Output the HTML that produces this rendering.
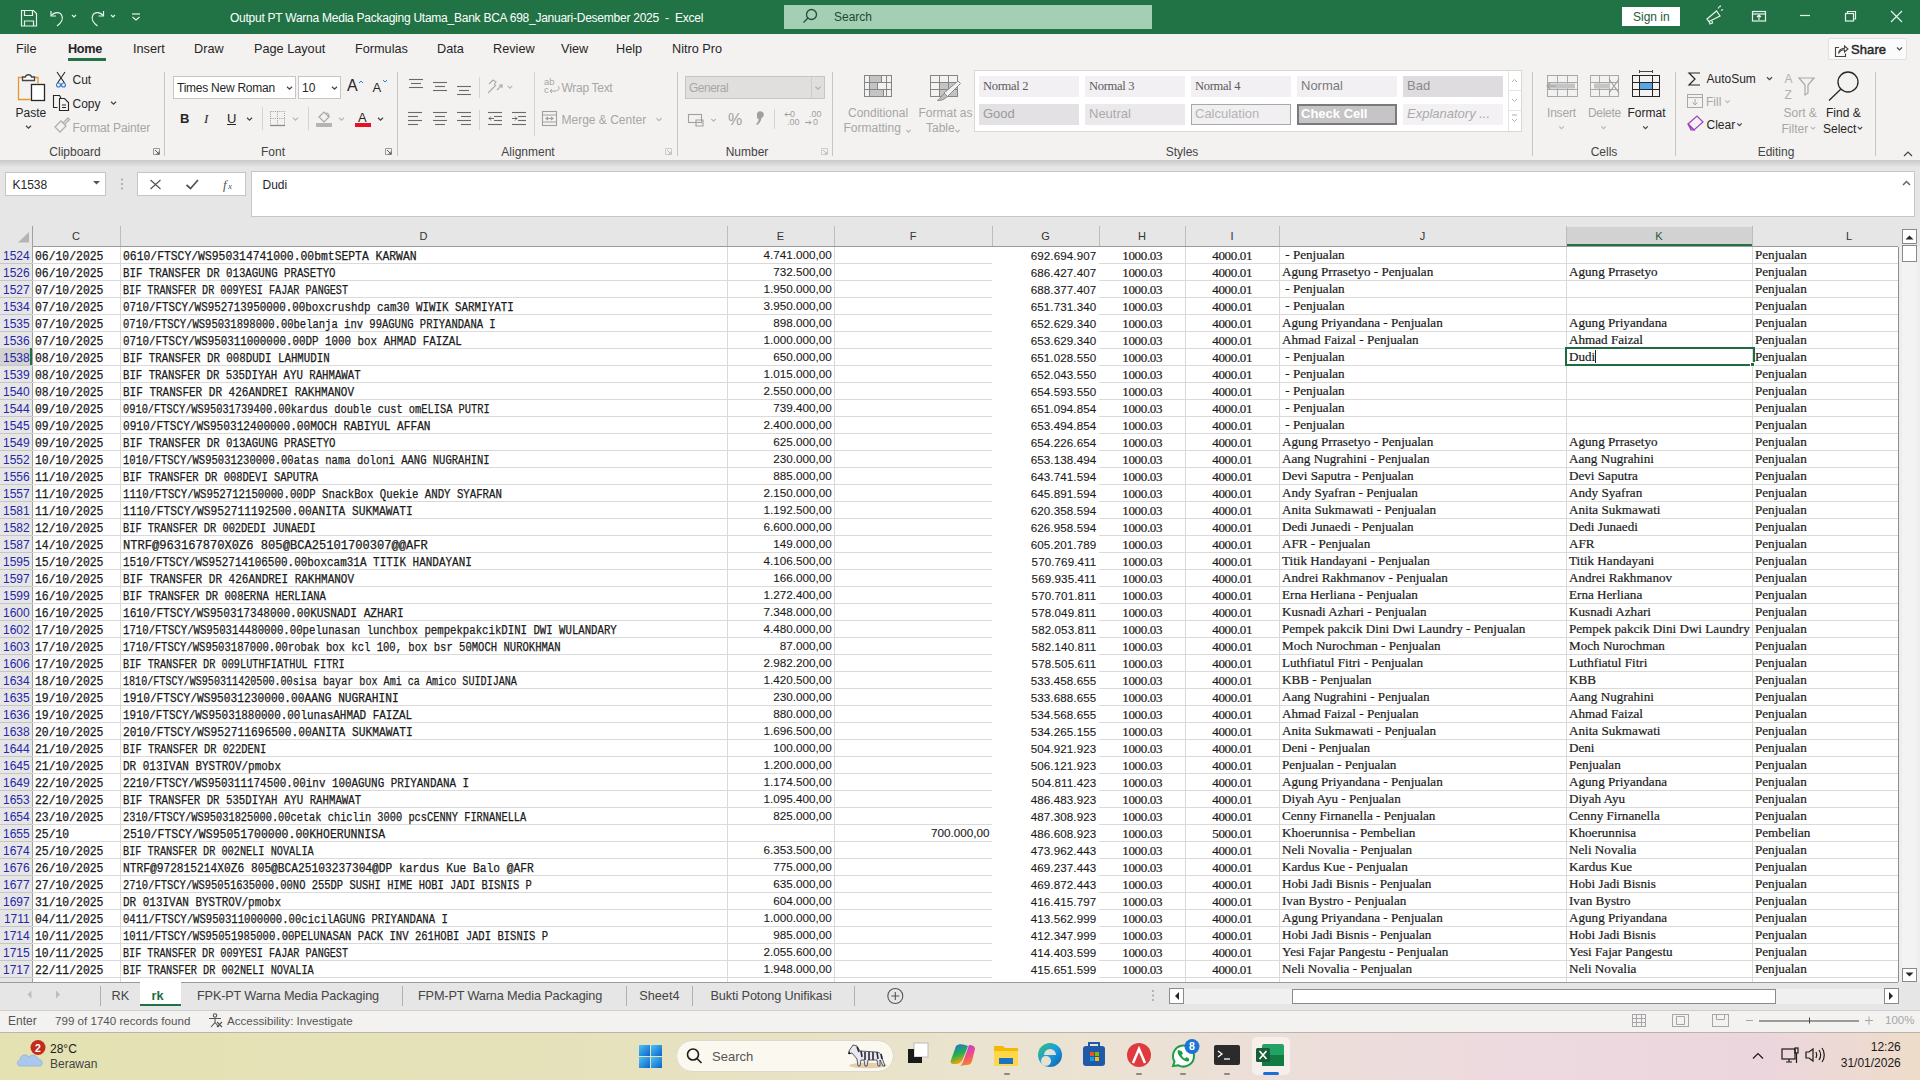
<!DOCTYPE html><html><head><meta charset="utf-8"><style>
html,body{margin:0;padding:0;width:1920px;height:1080px;overflow:hidden;background:#fff;}
body{position:relative;font-family:"Liberation Sans",sans-serif;}
.t{position:absolute;white-space:pre;line-height:1;}
.r{position:absolute;box-sizing:border-box;}
svg{position:absolute;overflow:visible;}
</style></head><body>
<div class="r" style="left:0px;top:0px;width:1920px;height:34px;background:#217346"></div>
<svg style="left:0;top:0" width="1" height="1"><g fill="none" stroke="#e8f3ec" stroke-width="1.2">
<path d="M21.5 10.5h12l3 3v12.5h-15z"/><path d="M24.5 10.5v5h8v-5"/><path d="M24.5 26v-5h9v5"/>
<path d="M51 11v5h5"/><path d="M51.5 15.5c3-4 9-4 10.5 0.5c1.5 4-1 7-5 10"/>
<path d="M72 15l2 2l2-2"/>
<path d="M103.5 11v5h-5"/><path d="M103 15.5c-3-4-9-4-10.5 0.5c-1.5 4 1 7 5 10"/>
<path d="M111 15l2 2l2-2"/>
<path d="M132 14h8"/><path d="M132.5 17l3.5 3l3.5-3"/>
</g></svg>
<div class="t" style="left:230px;top:11.84px;font-size:12px;color:#ffffff;font-family:'Liberation Sans', sans-serif;letter-spacing:-0.25px">Output PT Warna Media Packaging Utama_Bank BCA 698_Januari-Desember 2025  -  Excel</div>
<div class="r" style="left:784px;top:5px;width:368px;height:24px;background:#a3cfb4"></div>
<svg style="left:0;top:0" width="1" height="1"><g fill="none" stroke="#1f4e35" stroke-width="1.3"><circle cx="811.5" cy="14.5" r="5"/><path d="M808 18l-4.5 4.5"/></g></svg>
<div class="t" style="left:834px;top:10.84px;font-size:12px;color:#1f4a32;font-family:'Liberation Sans', sans-serif;">Search</div>
<div class="r" style="left:1622px;top:7px;width:58px;height:19px;background:#ffffff"></div>
<div class="t" style="left:1633px;top:11.34px;font-size:12px;color:#1f5a3a;font-family:'Liberation Sans', sans-serif;">Sign in</div>
<svg style="left:0;top:0" width="1" height="1"><g fill="none" stroke="#e8f3ec" stroke-width="1.2">
<path d="M1707 19l9.5-8l3.5 5l-11 5.5z"/><path d="M1709 21l1 3l2.5-1l-0.5-2"/><path d="M1718 8.5l1.5-2M1721 10.5l2-1M1720 7l0.5-1.5"/>
<rect x="1752.5" y="11.5" width="13" height="9.5"/><path d="M1752.5 14h13"/><path d="M1759 20v-5M1757 17l2-2l2 2"/>
<path d="M1800 15.5h10"/>
<rect x="1845.5" y="13.5" width="8" height="7.5"/><path d="M1847.5 13.5v-2h8v7.5h-2"/>
<path d="M1891 11l11 11M1902 11l-11 11"/>
</g></svg>
<div class="r" style="left:0px;top:34px;width:1920px;height:126px;background:#f3f2f1"></div>
<div class="t" style="left:16px;top:43.25px;font-size:12.7px;color:#262626;font-family:'Liberation Sans', sans-serif;">File</div>
<div class="t" style="left:68px;top:43.25px;font-size:12.7px;color:#262626;font-family:'Liberation Sans', sans-serif;font-weight:bold;letter-spacing:-0.3px">Home</div>
<div class="t" style="left:133px;top:43.25px;font-size:12.7px;color:#262626;font-family:'Liberation Sans', sans-serif;">Insert</div>
<div class="t" style="left:194px;top:43.25px;font-size:12.7px;color:#262626;font-family:'Liberation Sans', sans-serif;">Draw</div>
<div class="t" style="left:254px;top:43.25px;font-size:12.7px;color:#262626;font-family:'Liberation Sans', sans-serif;">Page Layout</div>
<div class="t" style="left:355px;top:43.25px;font-size:12.7px;color:#262626;font-family:'Liberation Sans', sans-serif;">Formulas</div>
<div class="t" style="left:437px;top:43.25px;font-size:12.7px;color:#262626;font-family:'Liberation Sans', sans-serif;">Data</div>
<div class="t" style="left:493px;top:43.25px;font-size:12.7px;color:#262626;font-family:'Liberation Sans', sans-serif;">Review</div>
<div class="t" style="left:561px;top:43.25px;font-size:12.7px;color:#262626;font-family:'Liberation Sans', sans-serif;">View</div>
<div class="t" style="left:616px;top:43.25px;font-size:12.7px;color:#262626;font-family:'Liberation Sans', sans-serif;">Help</div>
<div class="t" style="left:672px;top:43.25px;font-size:12.7px;color:#262626;font-family:'Liberation Sans', sans-serif;">Nitro Pro</div>
<div class="r" style="left:68px;top:58px;width:38px;height:3px;background:#217346"></div>
<div class="r" style="left:1828px;top:38px;width:79px;height:22px;background:#fbfbfb;border:1px solid #e1dfdd;border-radius:2px"></div>
<div class="t" style="left:1851px;top:43.00px;font-size:13px;color:#262626;font-family:'Liberation Sans', sans-serif;-webkit-text-stroke:0.45px #262626;letter-spacing:0.1px">Share</div>
<svg style="left:0;top:0" width="1" height="1"><g fill="none" stroke="#444" stroke-width="1.1">
<path d="M1839 47.5h-3.5v9h10v-3"/><path d="M1838.5 53.5c0.5-3 2.5-5 6-5.2v-2.3l3.5 3l-3.5 3v-2.2c-2.5 0-4.5 1.2-6 3.7z"/>
<path d="M1897 47.5l2.5 2.5l2.5-2.5"/></g></svg>
<div class="r" style="left:164px;top:72px;width:1px;height:84px;background:#c8c6c4"></div>
<div class="r" style="left:397px;top:72px;width:1px;height:84px;background:#c8c6c4"></div>
<div class="r" style="left:677px;top:72px;width:1px;height:84px;background:#c8c6c4"></div>
<div class="r" style="left:832px;top:72px;width:1px;height:84px;background:#c8c6c4"></div>
<div class="r" style="left:1532px;top:72px;width:1px;height:84px;background:#c8c6c4"></div>
<div class="r" style="left:1675px;top:72px;width:1px;height:84px;background:#c8c6c4"></div>
<div class="r" style="left:1875px;top:72px;width:1px;height:84px;background:#c8c6c4"></div>
<div class="t" style="left:-25px;width:200px;text-align:center;top:145.84px;font-size:12px;color:#444;font-family:'Liberation Sans', sans-serif;">Clipboard</div>
<div class="t" style="left:173px;width:200px;text-align:center;top:145.84px;font-size:12px;color:#444;font-family:'Liberation Sans', sans-serif;">Font</div>
<div class="t" style="left:428px;width:200px;text-align:center;top:145.84px;font-size:12px;color:#444;font-family:'Liberation Sans', sans-serif;">Alignment</div>
<div class="t" style="left:647px;width:200px;text-align:center;top:145.84px;font-size:12px;color:#444;font-family:'Liberation Sans', sans-serif;">Number</div>
<div class="t" style="left:1082px;width:200px;text-align:center;top:145.84px;font-size:12px;color:#444;font-family:'Liberation Sans', sans-serif;">Styles</div>
<div class="t" style="left:1504px;width:200px;text-align:center;top:145.84px;font-size:12px;color:#444;font-family:'Liberation Sans', sans-serif;">Cells</div>
<div class="t" style="left:1676px;width:200px;text-align:center;top:145.84px;font-size:12px;color:#444;font-family:'Liberation Sans', sans-serif;">Editing</div>
<svg style="left:0;top:0" width="1" height="1"><g fill="none" stroke-width="1">
<path d="M153.5 148.5h6v6h-6z" stroke="#999"/><path d="M155 150l4 4M156.5 154h2.5v-2.5" stroke="#555"/>
<path d="M385.5 148.5h6v6h-6z" stroke="#999"/><path d="M387 150l4 4M388.5 154h2.5v-2.5" stroke="#555"/>
<path d="M665.5 148.5h6v6h-6z" stroke="#ccc"/><path d="M667 150l4 4M668.5 154h2.5v-2.5" stroke="#bbb"/>
<path d="M821.5 148.5h6v6h-6z" stroke="#ccc"/><path d="M823 150l4 4M824.5 154h2.5v-2.5" stroke="#bbb"/>
<path d="M1904 156l4-4l4 4" stroke="#444" stroke-width="1.2"/>
</g></svg>
<svg style="left:0;top:0" width="1" height="1"><g fill="none" stroke-width="1.3">
<path d="M23 77.5h-4.5v22h12" stroke="#e8962a"/><path d="M33 77.5h5v6" stroke="#e8962a"/>
<path d="M22.5 80.5v-3.5h3c0.5-3 5.5-3 6 0h3v3.5z" stroke="#444" fill="#fff"/>
<rect x="31.5" y="84.5" width="13" height="16" stroke="#262626" fill="#fff"/>
</g></svg>
<div class="t" style="left:15.5px;top:106.84px;font-size:12px;color:#262626;font-family:'Liberation Sans', sans-serif;">Paste</div>
<svg style="left:0;top:0" width="1" height="1"><path d="M26.0 125.75l2.5 2.5l2.5 -2.5" fill="none" stroke="#444" stroke-width="1.2"/></svg>
<svg style="left:0;top:0" width="1" height="1"><g fill="none" stroke="#262626" stroke-width="1.1">
<path d="M57 72l7.5 11M65 72l-7.5 11" />
<circle cx="58.5" cy="85" r="2" stroke="#2b7cd3"/><circle cx="63.5" cy="85" r="2" stroke="#2b7cd3"/>
<path d="M57.5 107.5h-4v-12h6l1.5 2.5" /><path d="M59.5 98.5h5l4 4v8h-9z"/><path d="M62 105h4M62 107.5h4"/>
</g></svg>
<div class="t" style="left:72.5px;top:73.84px;font-size:12px;color:#262626;font-family:'Liberation Sans', sans-serif;">Cut</div>
<div class="t" style="left:72.5px;top:98.34px;font-size:12px;color:#262626;font-family:'Liberation Sans', sans-serif;">Copy</div>
<svg style="left:0;top:0" width="1" height="1"><path d="M111.0 101.75l2.5 2.5l2.5 -2.5" fill="none" stroke="#444" stroke-width="1.2"/></svg>
<svg style="left:0;top:0" width="1" height="1"><g fill="none" stroke="#b0b0b0" stroke-width="1.3">
<path d="M55 127l6-6l5 5l-6 6z"/><path d="M63 123l5-5l1.5 1.5l-5 5"/>
</g></svg>
<div class="t" style="left:72.5px;top:121.84px;font-size:12px;color:#a6a6a6;font-family:'Liberation Sans', sans-serif;letter-spacing:-0.12px">Format Painter</div>
<div class="r" style="left:173px;top:76px;width:123px;height:23px;background:#fff;border:1px solid #c8c6c4"></div>
<div class="t" style="left:177px;top:81.84px;font-size:12px;color:#262626;font-family:'Liberation Sans', sans-serif;letter-spacing:-0.25px">Times New Roman</div>
<svg style="left:0;top:0" width="1" height="1"><path d="M287.0 86.75l2.5 2.5l2.5 -2.5" fill="none" stroke="#444" stroke-width="1.2"/></svg>
<div class="r" style="left:298px;top:76px;width:43px;height:23px;background:#fff;border:1px solid #c8c6c4"></div>
<div class="t" style="left:302px;top:81.84px;font-size:12px;color:#262626;font-family:'Liberation Sans', sans-serif;">10</div>
<svg style="left:0;top:0" width="1" height="1"><path d="M332.0 86.75l2.5 2.5l2.5 -2.5" fill="none" stroke="#444" stroke-width="1.2"/></svg>
<div class="t" style="left:347px;top:77.96px;font-size:16px;color:#262626;font-family:'Liberation Sans', sans-serif;">A</div>
<div class="t" style="left:372.5px;top:80.50px;font-size:13px;color:#262626;font-family:'Liberation Sans', sans-serif;">A</div>
<svg style="left:0;top:0" width="1" height="1"><g fill="none" stroke="#2b7cd3" stroke-width="1"><path d="M359 83l2-2l2 2"/><path d="M383 80l2 2l2-2"/></g></svg>
<div class="t" style="left:180px;top:111.50px;font-size:13px;color:#262626;font-family:'Liberation Sans', sans-serif;font-weight:bold;">B</div>
<div class="t" style="left:204px;top:111.61px;font-size:13px;color:#262626;font-family:'Liberation Serif', serif;font-style:italic">I</div>
<div class="t" style="left:227px;top:111.50px;font-size:13px;color:#262626;font-family:'Liberation Sans', sans-serif;">U</div>
<div class="r" style="left:227px;top:124px;width:9px;height:1px;background:#262626"></div>
<svg style="left:0;top:0" width="1" height="1"><path d="M247.0 117.75l2.5 2.5l2.5 -2.5" fill="none" stroke="#444" stroke-width="1.2"/></svg>
<div class="r" style="left:262px;top:107px;width:1px;height:23px;background:#d6d4d2"></div>
<svg style="left:0;top:0" width="1" height="1"><g fill="none" stroke="#9a9a9a" stroke-width="1" stroke-dasharray="1 1.2">
<rect x="270.5" y="111.5" width="14" height="14"/><path d="M277.5 111.5v14M270.5 118.5h14"/></g>
<path d="M270 125.5h15" stroke="#8a8a8a" stroke-width="1.3"/></svg>
<svg style="left:0;top:0" width="1" height="1"><path d="M293.0 117.75l2.5 2.5l2.5 -2.5" fill="none" stroke="#b6b6b6" stroke-width="1.1"/></svg>
<div class="r" style="left:308px;top:107px;width:1px;height:23px;background:#d6d4d2"></div>
<svg style="left:0;top:0" width="1" height="1"><g fill="none" stroke="#a8a8a8" stroke-width="1.2"><path d="M319 117l5-5l5 5l-5 5z"/><path d="M326 113c2 0 3 2 3 4"/></g></svg>
<div class="r" style="left:316px;top:123px;width:16px;height:4px;background:#b4b4b4"></div>
<svg style="left:0;top:0" width="1" height="1"><path d="M339.0 117.75l2.5 2.5l2.5 -2.5" fill="none" stroke="#b6b6b6" stroke-width="1.1"/></svg>
<div class="t" style="left:358px;top:111.00px;font-size:13px;color:#262626;font-family:'Liberation Sans', sans-serif;">A</div>
<div class="r" style="left:355px;top:123px;width:16px;height:4px;background:#e81123"></div>
<svg style="left:0;top:0" width="1" height="1"><path d="M378.0 117.75l2.5 2.5l2.5 -2.5" fill="none" stroke="#444" stroke-width="1.2"/></svg>
<svg style="left:0;top:0" width="1" height="1"><path d="M409 79.5h14" stroke="#6a6a6a" stroke-width="1.1"/><path d="M411 83.5h10" stroke="#6a6a6a" stroke-width="1.1"/><path d="M409 87.5h14" stroke="#6a6a6a" stroke-width="1.1"/></svg>
<svg style="left:0;top:0" width="1" height="1"><path d="M433 82.5h14" stroke="#6a6a6a" stroke-width="1.1"/><path d="M435 86.5h10" stroke="#6a6a6a" stroke-width="1.1"/><path d="M433 90.5h14" stroke="#6a6a6a" stroke-width="1.1"/></svg>
<svg style="left:0;top:0" width="1" height="1"><path d="M457 86.5h14" stroke="#6a6a6a" stroke-width="1.1"/><path d="M459 90.5h10" stroke="#6a6a6a" stroke-width="1.1"/><path d="M457 94.5h14" stroke="#6a6a6a" stroke-width="1.1"/></svg>
<div class="r" style="left:479px;top:77px;width:1px;height:21px;background:#d6d4d2"></div>
<svg style="left:0;top:0" width="1" height="1"><g fill="none" stroke="#ababab" stroke-width="1.1"><path d="M488 93l8-8M493 80l3 2l-2 3M489 84l4-4"/><path d="M497 90l5-5l-3 0M502 85v3"/></g></svg>
<svg style="left:0;top:0" width="1" height="1"><path d="M507.7 85.85l2.3 2.3l2.3 -2.3" fill="none" stroke="#b6b6b6" stroke-width="1.1"/></svg>
<div class="r" style="left:534px;top:72px;width:1px;height:64px;background:#d6d4d2"></div>
<div class="t" style="left:544px;top:76.96px;font-size:9.5px;color:#a6a6a6;font-family:'Liberation Sans', sans-serif;">ab</div>
<div class="t" style="left:544px;top:84.96px;font-size:9.5px;color:#a6a6a6;font-family:'Liberation Sans', sans-serif;">c</div>
<svg style="left:0;top:0" width="1" height="1"><path d="M558 86c2 2 1 5-3 5l-4 0M552 89l-2 2l2 2" fill="none" stroke="#a6a6a6" stroke-width="1"/></svg>
<div class="t" style="left:561.5px;top:82.34px;font-size:12px;color:#a6a6a6;font-family:'Liberation Sans', sans-serif;letter-spacing:-0.3px">Wrap Text</div>
<svg style="left:0;top:0" width="1" height="1"><path d="M408 112.5h14" stroke="#6a6a6a" stroke-width="1.1"/><path d="M408 116.5h10" stroke="#6a6a6a" stroke-width="1.1"/><path d="M408 120.5h14" stroke="#6a6a6a" stroke-width="1.1"/><path d="M408 124.5h10" stroke="#6a6a6a" stroke-width="1.1"/></svg>
<svg style="left:0;top:0" width="1" height="1"><path d="M433 112.5h14" stroke="#6a6a6a" stroke-width="1.1"/><path d="M435 116.5h10" stroke="#6a6a6a" stroke-width="1.1"/><path d="M433 120.5h14" stroke="#6a6a6a" stroke-width="1.1"/><path d="M435 124.5h10" stroke="#6a6a6a" stroke-width="1.1"/></svg>
<svg style="left:0;top:0" width="1" height="1"><path d="M457 112.5h14" stroke="#6a6a6a" stroke-width="1.1"/><path d="M461 116.5h10" stroke="#6a6a6a" stroke-width="1.1"/><path d="M457 120.5h14" stroke="#6a6a6a" stroke-width="1.1"/><path d="M461 124.5h10" stroke="#6a6a6a" stroke-width="1.1"/></svg>
<div class="r" style="left:479px;top:110px;width:1px;height:20px;background:#d6d4d2"></div>
<svg style="left:0;top:0" width="1" height="1"><path d="M488 112.5h14" stroke="#6a6a6a" stroke-width="1.1"/><path d="M494 116.5h8" stroke="#6a6a6a" stroke-width="1.1"/><path d="M494 120.5h8" stroke="#6a6a6a" stroke-width="1.1"/><path d="M488 124.5h14" stroke="#6a6a6a" stroke-width="1.1"/></svg>
<svg style="left:0;top:0" width="1" height="1"><path d="M494 118.5h-5M491 116.5l-2 2l2 2" fill="none" stroke="#6a6a6a" stroke-width="1"/></svg>
<svg style="left:0;top:0" width="1" height="1"><path d="M512 112.5h14" stroke="#6a6a6a" stroke-width="1.1"/><path d="M518 116.5h8" stroke="#6a6a6a" stroke-width="1.1"/><path d="M518 120.5h8" stroke="#6a6a6a" stroke-width="1.1"/><path d="M512 124.5h14" stroke="#6a6a6a" stroke-width="1.1"/></svg>
<svg style="left:0;top:0" width="1" height="1"><path d="M512 118.5h5M515 116.5l2 2l-2 2" fill="none" stroke="#6a6a6a" stroke-width="1"/></svg>
<svg style="left:0;top:0" width="1" height="1"><g fill="none" stroke="#a0a0a0" stroke-width="1.1"><rect x="542.5" y="111.5" width="14" height="14"/><path d="M542.5 115h14M542.5 122h14M546 118.5h7M548 117l-2 1.5l2 1.5M551 117l2 1.5l-2 1.5"/></g></svg>
<div class="t" style="left:561.5px;top:113.84px;font-size:12px;color:#a6a6a6;font-family:'Liberation Sans', sans-serif;">Merge &amp; Center</div>
<svg style="left:0;top:0" width="1" height="1"><path d="M656.5 118.25l2.5 2.5l2.5 -2.5" fill="none" stroke="#b6b6b6" stroke-width="1.1"/></svg>
<div class="r" style="left:685px;top:76px;width:140px;height:23px;background:#e1dfdd;border:1px solid #c8c6c4"></div>
<div class="r" style="left:811px;top:77px;width:1px;height:21px;background:#cfcdcb"></div>
<div class="t" style="left:689px;top:81.84px;font-size:12px;color:#a8a8a8;font-family:'Liberation Sans', sans-serif;letter-spacing:-0.5px">General</div>
<svg style="left:0;top:0" width="1" height="1"><path d="M815.5 86.75l2.5 2.5l2.5 -2.5" fill="none" stroke="#b0b0b0" stroke-width="1.1"/></svg>
<svg style="left:0;top:0" width="1" height="1"><g fill="none" stroke="#a0a0a0" stroke-width="1.1"><rect x="688.5" y="114.5" width="13" height="8"/><path d="M696 120h7v6h-7z"/></g></svg>
<svg style="left:0;top:0" width="1" height="1"><path d="M711.2 118.85l2.3 2.3l2.3 -2.3" fill="none" stroke="#b6b6b6" stroke-width="1.1"/></svg>
<div class="t" style="left:728px;top:111.96px;font-size:16px;color:#a0a0a0;font-family:'Liberation Sans', sans-serif;">%</div>
<svg style="left:0;top:0" width="1" height="1"><path d="M757 113.5a3.5 3.5 0 1 1 4.5 4.5c-0.5 3-2 5.5-4.5 7l-0.8-1c1.5-1.5 2.5-3 2.5-5c-1 0-2-0.5-1.7-5.5z" fill="#a0a0a0"/></svg>
<div class="r" style="left:774px;top:109px;width:1px;height:20px;background:#d6d4d2"></div>
<div class="t" style="left:790px;top:110.38px;font-size:9px;color:#a0a0a0;font-family:'Liberation Sans', sans-serif;">0</div>
<div class="t" style="left:787px;top:118.38px;font-size:9px;color:#a0a0a0;font-family:'Liberation Sans', sans-serif;">.00</div>
<svg style="left:0;top:0" width="1" height="1"><path d="M791 114.5h-6M787 112.5l-2 2l2 2" fill="none" stroke="#a0a0a0" stroke-width="1"/></svg>
<div class="t" style="left:809px;top:110.38px;font-size:9px;color:#a0a0a0;font-family:'Liberation Sans', sans-serif;">.00</div>
<div class="t" style="left:813px;top:118.38px;font-size:9px;color:#a0a0a0;font-family:'Liberation Sans', sans-serif;">0</div>
<svg style="left:0;top:0" width="1" height="1"><path d="M805 122.5h6M809 120.5l2 2l-2 2" fill="none" stroke="#a0a0a0" stroke-width="1"/></svg>
<svg style="left:0;top:0" width="1" height="1"><g><rect x="869.5" y="75.5" width="12" height="7" fill="#c4c4c4"/><rect x="869.5" y="82.5" width="8" height="7" fill="#c4c4c4"/><rect x="869.5" y="89.5" width="14" height="7" fill="#c4c4c4"/>
<g fill="none" stroke="#858585" stroke-width="1"><rect x="864.5" y="75.5" width="27" height="21"/><path d="M869.5 75.5v21M886.5 75.5v21M864.5 82.5h27M864.5 89.5h27M881.5 75.5v7M877.5 82.5v7M883.5 89.5v7"/></g></g></svg>
<div class="t" style="left:848px;top:106.84px;font-size:12px;color:#a6a6a6;font-family:'Liberation Sans', sans-serif;">Conditional</div>
<div class="t" style="left:843.5px;top:122.34px;font-size:12px;color:#a6a6a6;font-family:'Liberation Sans', sans-serif;">Formatting</div>
<svg style="left:0;top:0" width="1" height="1"><path d="M906.3 129.9l2.2 2.2l2.2 -2.2" fill="none" stroke="#b6b6b6" stroke-width="1.1"/></svg>
<svg style="left:0;top:0" width="1" height="1"><g fill="none" stroke="#858585" stroke-width="1"><rect x="939.0" y="82.0" width="9.0" height="7.0" fill="#c4c4c4" stroke="none"/><rect x="939.0" y="89.0" width="9.0" height="7.0" fill="#c4c4c4" stroke="none"/><rect x="948.0" y="82.0" width="9.0" height="7.0" fill="#c4c4c4" stroke="none"/><rect x="948.0" y="89.0" width="9.0" height="7.0" fill="#c4c4c4" stroke="none"/><rect x="930.5" y="75.5" width="27" height="21"/><path d="M939.5 75v21"/><path d="M948.5 75v21"/><path d="M930 82.5h27"/><path d="M930 89.5h27"/></g></svg>
<svg style="left:0;top:0" width="1" height="1"><g stroke="#8a8a8a" stroke-width="1"><path d="M944 93l14-12l2.5 2.5l-13 13z" fill="#f3f2f1"/><path d="M944.5 93.5l-3 2.5c-1 1.5-2 3-4 4.5c3 0 6-0.5 8-2.5l2-1.5z" fill="#bdbdbd"/></g></svg>
<div class="t" style="left:918.5px;top:106.84px;font-size:12px;color:#a6a6a6;font-family:'Liberation Sans', sans-serif;">Format as</div>
<div class="t" style="left:926px;top:122.34px;font-size:12px;color:#a6a6a6;font-family:'Liberation Sans', sans-serif;">Table</div>
<svg style="left:0;top:0" width="1" height="1"><path d="M955.3 129.9l2.2 2.2l2.2 -2.2" fill="none" stroke="#b6b6b6" stroke-width="1.1"/></svg>
<div class="r" style="left:974px;top:70px;width:548px;height:62px;background:#ffffff;border:1px solid #dad8d6"></div>
<div class="r" style="left:1508px;top:71px;width:1px;height:60px;background:#e6e4e2"></div>
<div class="r" style="left:1509px;top:90px;width:12px;height:1px;background:#e6e4e2"></div>
<div class="r" style="left:1509px;top:110px;width:12px;height:1px;background:#e6e4e2"></div>
<svg style="left:0;top:0" width="1" height="1"><g fill="none" stroke="#b0b0b0" stroke-width="1"><path d="M1512 82l2.5-2.5l2.5 2.5"/><path d="M1512 99l2.5 2.5l2.5-2.5"/><path d="M1512 115h5M1512 119l2.5 2.5l2.5-2.5"/></g></svg>
<div class="r" style="left:979px;top:76px;width:100px;height:21px;background:#f3f0f3;"></div>
<div class="t" style="left:983px;top:79.83px;font-size:12.5px;color:#5a5a5a;font-family:'Liberation Serif', serif;letter-spacing:-0.3px">Normal 2</div>
<div class="r" style="left:1085px;top:76px;width:100px;height:21px;background:#f3f0f3;"></div>
<div class="t" style="left:1089px;top:79.83px;font-size:12.5px;color:#5a5a5a;font-family:'Liberation Serif', serif;letter-spacing:-0.3px">Normal 3</div>
<div class="r" style="left:1191px;top:76px;width:100px;height:21px;background:#f3f0f3;"></div>
<div class="t" style="left:1195px;top:79.83px;font-size:12.5px;color:#5a5a5a;font-family:'Liberation Serif', serif;letter-spacing:-0.3px">Normal 4</div>
<div class="r" style="left:1297px;top:76px;width:100px;height:21px;background:#f3f0f3;"></div>
<div class="t" style="left:1301px;top:79.30px;font-size:13px;color:#7a7a7a;font-family:'Liberation Sans', sans-serif;">Normal</div>
<div class="r" style="left:1403px;top:76px;width:100px;height:21px;background:#dedcde;"></div>
<div class="t" style="left:1407px;top:79.30px;font-size:13px;color:#8a8a8a;font-family:'Liberation Sans', sans-serif;">Bad</div>
<div class="r" style="left:979px;top:104px;width:100px;height:21px;background:#e3e1e3;"></div>
<div class="t" style="left:983px;top:107.30px;font-size:13px;color:#9a9a9a;font-family:'Liberation Sans', sans-serif;">Good</div>
<div class="r" style="left:1085px;top:104px;width:100px;height:21px;background:#ebe9eb;"></div>
<div class="t" style="left:1089px;top:107.30px;font-size:13px;color:#aaaaaa;font-family:'Liberation Sans', sans-serif;">Neutral</div>
<div class="r" style="left:1191px;top:104px;width:100px;height:21px;background:#f1eff1;border:1px solid #a8a8a8;"></div>
<div class="t" style="left:1195px;top:107.30px;font-size:13px;color:#b4b4b4;font-family:'Liberation Sans', sans-serif;">Calculation</div>
<div class="r" style="left:1297px;top:104px;width:100px;height:21px;background:#c6c4c6;border:2px double #7a7a7a;"></div>
<div class="t" style="left:1301px;top:107.30px;font-size:13px;color:#ffffff;font-family:'Liberation Sans', sans-serif;font-weight:bold;">Check Cell</div>
<div class="r" style="left:1403px;top:104px;width:100px;height:21px;background:#f3f1f3;"></div>
<div class="t" style="left:1407px;top:107.30px;font-size:13px;color:#aaaaaa;font-family:'Liberation Sans', sans-serif;font-style:italic;">Explanatory ...</div>
<svg style="left:0;top:0" width="1" height="1"><g fill="none" stroke="#a8a8a8" stroke-width="1">
<rect x="1547.5" y="75.5" width="30" height="21"/><path d="M1547.5 82.5h30M1547.5 89.5h30M1557.5 75.5v21M1567.5 75.5v21"/>
<path d="M1549 86h26" stroke="#c4c4c4" stroke-width="5"/><path d="M1556 86h-9M1550 83l-3 3l3 3" stroke="#a0a0a0" stroke-width="1.2"/>
<rect x="1590.5" y="75.5" width="28" height="21"/><path d="M1590.5 82.5h28M1590.5 89.5h28M1599.5 75.5v21M1609.5 75.5v21"/>
<path d="M1594 86h16" stroke="#c4c4c4" stroke-width="5"/><path d="M1609 79l10 14M1619 79l-10 14" stroke="#a0a0a0" stroke-width="1.2"/>
</g></svg>
<svg style="left:0;top:0" width="1" height="1"><g fill="none" stroke="#262626" stroke-width="1">
<path d="M1639.5 71.5h13M1639.5 70v3M1652.5 70v3" stroke="#444"/>
<rect x="1640" y="83" width="12" height="6" fill="#5aa5e6" stroke="none"/>
<rect x="1632.5" y="75.5" width="27" height="21"/><path d="M1632.5 82.5h27M1632.5 89.5h27M1639.5 75.5v21M1652.5 75.5v21"/>
</g></svg>
<div class="t" style="left:1547px;top:106.84px;font-size:12px;color:#a6a6a6;font-family:'Liberation Sans', sans-serif;letter-spacing:-0.2px">Insert</div>
<div class="t" style="left:1588px;top:106.84px;font-size:12px;color:#a6a6a6;font-family:'Liberation Sans', sans-serif;letter-spacing:-0.3px">Delete</div>
<div class="t" style="left:1627.5px;top:106.84px;font-size:12px;color:#262626;font-family:'Liberation Sans', sans-serif;">Format</div>
<svg style="left:0;top:0" width="1" height="1"><path d="M1559.2 126.35l2.3 2.3l2.3 -2.3" fill="none" stroke="#b8b8b8" stroke-width="1.1"/><path d="M1601.2 126.35l2.3 2.3l2.3 -2.3" fill="none" stroke="#b8b8b8" stroke-width="1.1"/><path d="M1643.2 126.35l2.3 2.3l2.3 -2.3" fill="none" stroke="#444" stroke-width="1.2"/></svg>
<svg style="left:0;top:0" width="1" height="1"><path d="M1700 73h-11l6 6l-6 6h11" fill="none" stroke="#262626" stroke-width="1.2"/></svg>
<div class="t" style="left:1706.5px;top:72.84px;font-size:12px;color:#262626;font-family:'Liberation Sans', sans-serif;">AutoSum</div>
<svg style="left:0;top:0" width="1" height="1"><path d="M1767.0 77.25l2.5 2.5l2.5 -2.5" fill="none" stroke="#444" stroke-width="1.2"/></svg>
<svg style="left:0;top:0" width="1" height="1"><g fill="none" stroke="#a8a8a8" stroke-width="1"><rect x="1687.5" y="94.5" width="15" height="13"/><path d="M1687.5 97.5h15M1695 99v6M1692.5 102.5l2.5 2.5l2.5-2.5"/></g></svg>
<div class="t" style="left:1706px;top:96.34px;font-size:12px;color:#a6a6a6;font-family:'Liberation Sans', sans-serif;">Fill</div>
<svg style="left:0;top:0" width="1" height="1"><path d="M1725.3 100.4l2.2 2.2l2.2 -2.2" fill="none" stroke="#b8b8b8" stroke-width="1.1"/></svg>
<svg style="left:0;top:0" width="1" height="1"><g stroke="#a03fbf" stroke-width="1.2" fill="none"><path d="M1688 124l9-8l6 6l-9 8z"/><path d="M1688 124l6 6l-3 0z" fill="#c880e0"/></g></svg>
<div class="t" style="left:1706.5px;top:119.34px;font-size:12px;color:#262626;font-family:'Liberation Sans', sans-serif;">Clear</div>
<svg style="left:0;top:0" width="1" height="1"><path d="M1737.3 123.4l2.2 2.2l2.2 -2.2" fill="none" stroke="#444" stroke-width="1.2"/></svg>
<div class="t" style="left:1784.5px;top:72.84px;font-size:12px;color:#b0b0b0;font-family:'Liberation Sans', sans-serif;">A</div>
<div class="t" style="left:1784.5px;top:89.34px;font-size:12px;color:#b0b0b0;font-family:'Liberation Sans', sans-serif;">Z</div>
<svg style="left:0;top:0" width="1" height="1"><path d="M1799 78h15l-6 7v8l-3 2v-10z" fill="none" stroke="#a8a8a8" stroke-width="1.2"/></svg>
<div class="t" style="left:1783.5px;top:106.84px;font-size:12px;color:#a6a6a6;font-family:'Liberation Sans', sans-serif;">Sort &amp;</div>
<div class="t" style="left:1781.5px;top:122.84px;font-size:12px;color:#a6a6a6;font-family:'Liberation Sans', sans-serif;">Filter</div>
<svg style="left:0;top:0" width="1" height="1"><path d="M1810.8 126.9l2.2 2.2l2.2 -2.2" fill="none" stroke="#b8b8b8" stroke-width="1.1"/></svg>
<svg style="left:0;top:0" width="1" height="1"><g fill="none" stroke="#262626" stroke-width="1.3"><circle cx="1848" cy="82" r="10"/><path d="M1841 89l-12 11.5"/></g></svg>
<div class="t" style="left:1826px;top:106.84px;font-size:12px;color:#262626;font-family:'Liberation Sans', sans-serif;">Find &amp;</div>
<div class="t" style="left:1823px;top:122.84px;font-size:12px;color:#262626;font-family:'Liberation Sans', sans-serif;">Select</div>
<svg style="left:0;top:0" width="1" height="1"><path d="M1857.8 126.9l2.2 2.2l2.2 -2.2" fill="none" stroke="#444" stroke-width="1.2"/></svg>
<div class="r" style="left:0px;top:160px;width:1920px;height:87px;background:#e6e6e6"></div>
<div class="r" style="left:0px;top:160px;width:1920px;height:7px;background:linear-gradient(#c9c9c9,#e6e6e6)"></div>
<div class="r" style="left:5px;top:172px;width:101px;height:24px;background:#fff;border:1px solid #c8c6c4"></div>
<div class="t" style="left:12.5px;top:178.84px;font-size:12px;color:#262626;font-family:'Liberation Sans', sans-serif;">K1538</div>
<svg style="left:0;top:0" width="1" height="1"><path d="M93 181h7l-3.5 3.5z" fill="#555"/></svg>
<svg style="left:0;top:0" width="1" height="1"><g fill="#999"><circle cx="122" cy="179.5" r="0.9"/><circle cx="122" cy="184" r="0.9"/><circle cx="122" cy="188.5" r="0.9"/></g></svg>
<div class="r" style="left:137px;top:172px;width:109px;height:24px;background:#fff;border:1px solid #c8c6c4"></div>
<svg style="left:0;top:0" width="1" height="1"><g fill="none" stroke="#555" stroke-width="1.2"><path d="M150.5 180l10 9M160.5 180l-10 9"/><path d="M186.5 185l4 3.5l7.5-8.5" stroke-width="1.8"/></g></svg>
<div class="t" style="left:223px;top:178.11px;font-size:13px;color:#555;font-family:'Liberation Serif', serif;font-style:italic">f</div>
<div class="t" style="left:228px;top:182.46px;font-size:9px;color:#555;font-family:'Liberation Serif', serif;font-style:italic">x</div>
<div class="r" style="left:251px;top:171px;width:1664px;height:46px;background:#fff;border:1px solid #c8c6c4"></div>
<div class="t" style="left:262.5px;top:178.84px;font-size:12px;color:#262626;font-family:'Liberation Sans', sans-serif;">Dudi</div>
<svg style="left:0;top:0" width="1" height="1"><path d="M1903 185l3.5-3.5l3.5 3.5" fill="none" stroke="#666" stroke-width="1.5"/></svg>
<div class="r" style="left:1566px;top:227px;width:186px;height:20px;background:#d2d2d2"></div>
<div class="r" style="left:1566px;top:244px;width:186px;height:2px;background:#217346"></div>
<div class="r" style="left:32px;top:226px;width:1px;height:20px;background:#bdbdbd"></div>
<div class="t" style="left:-24.0px;width:200px;text-align:center;top:231.19px;font-size:11px;color:#333;font-family:'Liberation Sans', sans-serif;">C</div>
<div class="r" style="left:120px;top:226px;width:1px;height:20px;background:#bdbdbd"></div>
<div class="t" style="left:323.5px;width:200px;text-align:center;top:231.19px;font-size:11px;color:#333;font-family:'Liberation Sans', sans-serif;">D</div>
<div class="r" style="left:727px;top:226px;width:1px;height:20px;background:#bdbdbd"></div>
<div class="t" style="left:680.5px;width:200px;text-align:center;top:231.19px;font-size:11px;color:#333;font-family:'Liberation Sans', sans-serif;">E</div>
<div class="r" style="left:834px;top:226px;width:1px;height:20px;background:#bdbdbd"></div>
<div class="t" style="left:813.0px;width:200px;text-align:center;top:231.19px;font-size:11px;color:#333;font-family:'Liberation Sans', sans-serif;">F</div>
<div class="r" style="left:992px;top:226px;width:1px;height:20px;background:#bdbdbd"></div>
<div class="t" style="left:945.5px;width:200px;text-align:center;top:231.19px;font-size:11px;color:#333;font-family:'Liberation Sans', sans-serif;">G</div>
<div class="r" style="left:1099px;top:226px;width:1px;height:20px;background:#bdbdbd"></div>
<div class="t" style="left:1042.0px;width:200px;text-align:center;top:231.19px;font-size:11px;color:#333;font-family:'Liberation Sans', sans-serif;">H</div>
<div class="r" style="left:1185px;top:226px;width:1px;height:20px;background:#bdbdbd"></div>
<div class="t" style="left:1132.0px;width:200px;text-align:center;top:231.19px;font-size:11px;color:#333;font-family:'Liberation Sans', sans-serif;">I</div>
<div class="r" style="left:1279px;top:226px;width:1px;height:20px;background:#bdbdbd"></div>
<div class="t" style="left:1322.5px;width:200px;text-align:center;top:231.19px;font-size:11px;color:#333;font-family:'Liberation Sans', sans-serif;">J</div>
<div class="r" style="left:1566px;top:226px;width:1px;height:20px;background:#bdbdbd"></div>
<div class="t" style="left:1559.0px;width:200px;text-align:center;top:231.19px;font-size:11px;color:#1e5c3a;font-family:'Liberation Sans', sans-serif;">K</div>
<div class="r" style="left:1752px;top:226px;width:1px;height:20px;background:#bdbdbd"></div>
<div class="t" style="left:1749px;width:200px;text-align:center;top:231.19px;font-size:11px;color:#333;font-family:'Liberation Sans', sans-serif;">L</div>
<div class="r" style="left:1898px;top:226px;width:1px;height:20px;background:#bdbdbd"></div>
<div class="r" style="left:32px;top:246px;width:1866px;height:1px;background:#9b9b9b"></div>
<svg style="left:0;top:0" width="1" height="1"><path d="M29 232v10.5h-11z" fill="#b4b4b4"/></svg>
<div class="r" style="left:0px;top:247px;width:1898px;height:735px;background:#ffffff"></div>
<div class="r" style="left:0px;top:247px;width:32px;height:735px;background:#e6e6e6"></div>
<div class="r" style="left:32px;top:226px;width:1px;height:756px;background:#a0a0a0"></div>
<div class="r" style="left:1898px;top:226px;width:22px;height:756px;background:#e6e6e6"></div>
<div class="r" style="left:1899px;top:247px;width:21px;height:735px;background:#eeeeee"></div>
<div class="r" style="left:1902px;top:262px;width:15px;height:706px;background:#f3f3f3"></div>
<div class="r" style="left:1898px;top:247px;width:1px;height:735px;background:#8e8e8e"></div>
<div class="r" style="left:1902px;top:229px;width:15px;height:15px;background:#fff;border:1px solid #8a8a8a"></div>
<svg style="left:0;top:0" width="1" height="1"><path d="M1905.5 239.5h8l-4-4z" fill="#262626"/></svg>
<div class="r" style="left:1902px;top:245px;width:15px;height:17px;background:#fff;border:1px solid #8a8a8a"></div>
<div class="r" style="left:1902px;top:968px;width:15px;height:14px;background:#fff;border:1px solid #8a8a8a"></div>
<svg style="left:0;top:0" width="1" height="1"><path d="M1905.5 972.5h8l-4 4z" fill="#262626"/></svg>
<div class="r" style="left:32px;top:263px;width:960px;height:1px;background:#dadada"></div>
<div class="r" style="left:1099px;top:263px;width:799px;height:1px;background:#dadada"></div>
<div class="r" style="left:0px;top:263px;width:32px;height:1px;background:#c6c6c6"></div>
<div class="r" style="left:32px;top:280px;width:960px;height:1px;background:#dadada"></div>
<div class="r" style="left:1099px;top:280px;width:799px;height:1px;background:#dadada"></div>
<div class="r" style="left:0px;top:280px;width:32px;height:1px;background:#c6c6c6"></div>
<div class="r" style="left:32px;top:297px;width:960px;height:1px;background:#dadada"></div>
<div class="r" style="left:1099px;top:297px;width:799px;height:1px;background:#dadada"></div>
<div class="r" style="left:0px;top:297px;width:32px;height:1px;background:#c6c6c6"></div>
<div class="r" style="left:32px;top:314px;width:960px;height:1px;background:#dadada"></div>
<div class="r" style="left:1099px;top:314px;width:799px;height:1px;background:#dadada"></div>
<div class="r" style="left:0px;top:314px;width:32px;height:1px;background:#c6c6c6"></div>
<div class="r" style="left:32px;top:331px;width:960px;height:1px;background:#dadada"></div>
<div class="r" style="left:1099px;top:331px;width:799px;height:1px;background:#dadada"></div>
<div class="r" style="left:0px;top:331px;width:32px;height:1px;background:#c6c6c6"></div>
<div class="r" style="left:32px;top:348px;width:960px;height:1px;background:#dadada"></div>
<div class="r" style="left:1099px;top:348px;width:799px;height:1px;background:#dadada"></div>
<div class="r" style="left:0px;top:348px;width:32px;height:1px;background:#c6c6c6"></div>
<div class="r" style="left:32px;top:365px;width:960px;height:1px;background:#dadada"></div>
<div class="r" style="left:1099px;top:365px;width:799px;height:1px;background:#dadada"></div>
<div class="r" style="left:0px;top:365px;width:32px;height:1px;background:#c6c6c6"></div>
<div class="r" style="left:32px;top:382px;width:960px;height:1px;background:#dadada"></div>
<div class="r" style="left:1099px;top:382px;width:799px;height:1px;background:#dadada"></div>
<div class="r" style="left:0px;top:382px;width:32px;height:1px;background:#c6c6c6"></div>
<div class="r" style="left:32px;top:399px;width:960px;height:1px;background:#dadada"></div>
<div class="r" style="left:1099px;top:399px;width:799px;height:1px;background:#dadada"></div>
<div class="r" style="left:0px;top:399px;width:32px;height:1px;background:#c6c6c6"></div>
<div class="r" style="left:32px;top:416px;width:960px;height:1px;background:#dadada"></div>
<div class="r" style="left:1099px;top:416px;width:799px;height:1px;background:#dadada"></div>
<div class="r" style="left:0px;top:416px;width:32px;height:1px;background:#c6c6c6"></div>
<div class="r" style="left:32px;top:433px;width:960px;height:1px;background:#dadada"></div>
<div class="r" style="left:1099px;top:433px;width:799px;height:1px;background:#dadada"></div>
<div class="r" style="left:0px;top:433px;width:32px;height:1px;background:#c6c6c6"></div>
<div class="r" style="left:32px;top:450px;width:960px;height:1px;background:#dadada"></div>
<div class="r" style="left:1099px;top:450px;width:799px;height:1px;background:#dadada"></div>
<div class="r" style="left:0px;top:450px;width:32px;height:1px;background:#c6c6c6"></div>
<div class="r" style="left:32px;top:467px;width:960px;height:1px;background:#dadada"></div>
<div class="r" style="left:1099px;top:467px;width:799px;height:1px;background:#dadada"></div>
<div class="r" style="left:0px;top:467px;width:32px;height:1px;background:#c6c6c6"></div>
<div class="r" style="left:32px;top:484px;width:960px;height:1px;background:#dadada"></div>
<div class="r" style="left:1099px;top:484px;width:799px;height:1px;background:#dadada"></div>
<div class="r" style="left:0px;top:484px;width:32px;height:1px;background:#c6c6c6"></div>
<div class="r" style="left:32px;top:501px;width:960px;height:1px;background:#dadada"></div>
<div class="r" style="left:1099px;top:501px;width:799px;height:1px;background:#dadada"></div>
<div class="r" style="left:0px;top:501px;width:32px;height:1px;background:#c6c6c6"></div>
<div class="r" style="left:32px;top:518px;width:960px;height:1px;background:#dadada"></div>
<div class="r" style="left:1099px;top:518px;width:799px;height:1px;background:#dadada"></div>
<div class="r" style="left:0px;top:518px;width:32px;height:1px;background:#c6c6c6"></div>
<div class="r" style="left:32px;top:535px;width:960px;height:1px;background:#dadada"></div>
<div class="r" style="left:1099px;top:535px;width:799px;height:1px;background:#dadada"></div>
<div class="r" style="left:0px;top:535px;width:32px;height:1px;background:#c6c6c6"></div>
<div class="r" style="left:32px;top:552px;width:960px;height:1px;background:#dadada"></div>
<div class="r" style="left:1099px;top:552px;width:799px;height:1px;background:#dadada"></div>
<div class="r" style="left:0px;top:552px;width:32px;height:1px;background:#c6c6c6"></div>
<div class="r" style="left:32px;top:569px;width:960px;height:1px;background:#dadada"></div>
<div class="r" style="left:1099px;top:569px;width:799px;height:1px;background:#dadada"></div>
<div class="r" style="left:0px;top:569px;width:32px;height:1px;background:#c6c6c6"></div>
<div class="r" style="left:32px;top:586px;width:960px;height:1px;background:#dadada"></div>
<div class="r" style="left:1099px;top:586px;width:799px;height:1px;background:#dadada"></div>
<div class="r" style="left:0px;top:586px;width:32px;height:1px;background:#c6c6c6"></div>
<div class="r" style="left:32px;top:603px;width:960px;height:1px;background:#dadada"></div>
<div class="r" style="left:1099px;top:603px;width:799px;height:1px;background:#dadada"></div>
<div class="r" style="left:0px;top:603px;width:32px;height:1px;background:#c6c6c6"></div>
<div class="r" style="left:32px;top:620px;width:960px;height:1px;background:#dadada"></div>
<div class="r" style="left:1099px;top:620px;width:799px;height:1px;background:#dadada"></div>
<div class="r" style="left:0px;top:620px;width:32px;height:1px;background:#c6c6c6"></div>
<div class="r" style="left:32px;top:637px;width:960px;height:1px;background:#dadada"></div>
<div class="r" style="left:1099px;top:637px;width:799px;height:1px;background:#dadada"></div>
<div class="r" style="left:0px;top:637px;width:32px;height:1px;background:#c6c6c6"></div>
<div class="r" style="left:32px;top:654px;width:960px;height:1px;background:#dadada"></div>
<div class="r" style="left:1099px;top:654px;width:799px;height:1px;background:#dadada"></div>
<div class="r" style="left:0px;top:654px;width:32px;height:1px;background:#c6c6c6"></div>
<div class="r" style="left:32px;top:671px;width:960px;height:1px;background:#dadada"></div>
<div class="r" style="left:1099px;top:671px;width:799px;height:1px;background:#dadada"></div>
<div class="r" style="left:0px;top:671px;width:32px;height:1px;background:#c6c6c6"></div>
<div class="r" style="left:32px;top:688px;width:960px;height:1px;background:#dadada"></div>
<div class="r" style="left:1099px;top:688px;width:799px;height:1px;background:#dadada"></div>
<div class="r" style="left:0px;top:688px;width:32px;height:1px;background:#c6c6c6"></div>
<div class="r" style="left:32px;top:705px;width:960px;height:1px;background:#dadada"></div>
<div class="r" style="left:1099px;top:705px;width:799px;height:1px;background:#dadada"></div>
<div class="r" style="left:0px;top:705px;width:32px;height:1px;background:#c6c6c6"></div>
<div class="r" style="left:32px;top:722px;width:960px;height:1px;background:#dadada"></div>
<div class="r" style="left:1099px;top:722px;width:799px;height:1px;background:#dadada"></div>
<div class="r" style="left:0px;top:722px;width:32px;height:1px;background:#c6c6c6"></div>
<div class="r" style="left:32px;top:739px;width:960px;height:1px;background:#dadada"></div>
<div class="r" style="left:1099px;top:739px;width:799px;height:1px;background:#dadada"></div>
<div class="r" style="left:0px;top:739px;width:32px;height:1px;background:#c6c6c6"></div>
<div class="r" style="left:32px;top:756px;width:960px;height:1px;background:#dadada"></div>
<div class="r" style="left:1099px;top:756px;width:799px;height:1px;background:#dadada"></div>
<div class="r" style="left:0px;top:756px;width:32px;height:1px;background:#c6c6c6"></div>
<div class="r" style="left:32px;top:773px;width:960px;height:1px;background:#dadada"></div>
<div class="r" style="left:1099px;top:773px;width:799px;height:1px;background:#dadada"></div>
<div class="r" style="left:0px;top:773px;width:32px;height:1px;background:#c6c6c6"></div>
<div class="r" style="left:32px;top:790px;width:960px;height:1px;background:#dadada"></div>
<div class="r" style="left:1099px;top:790px;width:799px;height:1px;background:#dadada"></div>
<div class="r" style="left:0px;top:790px;width:32px;height:1px;background:#c6c6c6"></div>
<div class="r" style="left:32px;top:807px;width:960px;height:1px;background:#dadada"></div>
<div class="r" style="left:1099px;top:807px;width:799px;height:1px;background:#dadada"></div>
<div class="r" style="left:0px;top:807px;width:32px;height:1px;background:#c6c6c6"></div>
<div class="r" style="left:32px;top:824px;width:960px;height:1px;background:#dadada"></div>
<div class="r" style="left:1099px;top:824px;width:799px;height:1px;background:#dadada"></div>
<div class="r" style="left:0px;top:824px;width:32px;height:1px;background:#c6c6c6"></div>
<div class="r" style="left:32px;top:841px;width:960px;height:1px;background:#dadada"></div>
<div class="r" style="left:1099px;top:841px;width:799px;height:1px;background:#dadada"></div>
<div class="r" style="left:0px;top:841px;width:32px;height:1px;background:#c6c6c6"></div>
<div class="r" style="left:32px;top:858px;width:960px;height:1px;background:#dadada"></div>
<div class="r" style="left:1099px;top:858px;width:799px;height:1px;background:#dadada"></div>
<div class="r" style="left:0px;top:858px;width:32px;height:1px;background:#c6c6c6"></div>
<div class="r" style="left:32px;top:875px;width:960px;height:1px;background:#dadada"></div>
<div class="r" style="left:1099px;top:875px;width:799px;height:1px;background:#dadada"></div>
<div class="r" style="left:0px;top:875px;width:32px;height:1px;background:#c6c6c6"></div>
<div class="r" style="left:32px;top:892px;width:960px;height:1px;background:#dadada"></div>
<div class="r" style="left:1099px;top:892px;width:799px;height:1px;background:#dadada"></div>
<div class="r" style="left:0px;top:892px;width:32px;height:1px;background:#c6c6c6"></div>
<div class="r" style="left:32px;top:909px;width:960px;height:1px;background:#dadada"></div>
<div class="r" style="left:1099px;top:909px;width:799px;height:1px;background:#dadada"></div>
<div class="r" style="left:0px;top:909px;width:32px;height:1px;background:#c6c6c6"></div>
<div class="r" style="left:32px;top:926px;width:960px;height:1px;background:#dadada"></div>
<div class="r" style="left:1099px;top:926px;width:799px;height:1px;background:#dadada"></div>
<div class="r" style="left:0px;top:926px;width:32px;height:1px;background:#c6c6c6"></div>
<div class="r" style="left:32px;top:943px;width:960px;height:1px;background:#dadada"></div>
<div class="r" style="left:1099px;top:943px;width:799px;height:1px;background:#dadada"></div>
<div class="r" style="left:0px;top:943px;width:32px;height:1px;background:#c6c6c6"></div>
<div class="r" style="left:32px;top:960px;width:960px;height:1px;background:#dadada"></div>
<div class="r" style="left:1099px;top:960px;width:799px;height:1px;background:#dadada"></div>
<div class="r" style="left:0px;top:960px;width:32px;height:1px;background:#c6c6c6"></div>
<div class="r" style="left:32px;top:977px;width:960px;height:1px;background:#dadada"></div>
<div class="r" style="left:1099px;top:977px;width:799px;height:1px;background:#dadada"></div>
<div class="r" style="left:0px;top:977px;width:32px;height:1px;background:#c6c6c6"></div>
<div class="r" style="left:120px;top:247px;width:1px;height:735px;background:#dadada"></div>
<div class="r" style="left:727px;top:247px;width:1px;height:735px;background:#dadada"></div>
<div class="r" style="left:834px;top:247px;width:1px;height:735px;background:#dadada"></div>
<div class="r" style="left:1185px;top:247px;width:1px;height:735px;background:#dadada"></div>
<div class="r" style="left:1279px;top:247px;width:1px;height:735px;background:#dadada"></div>
<div class="r" style="left:1566px;top:247px;width:1px;height:735px;background:#dadada"></div>
<div class="r" style="left:1752px;top:247px;width:1px;height:735px;background:#dadada"></div>
<div class="r" style="left:0px;top:348px;width:32px;height:17px;background:#d2d2d2"></div>
<div class="r" style="left:30px;top:348px;width:2px;height:17px;background:#217346"></div>
<div class="t" style="left:-370.4px;width:400px;text-align:right;top:250.04px;font-size:12px;color:#2626a6;font-family:'Liberation Sans', sans-serif;letter-spacing:-0.05px">1524</div>
<div class="t" style="left:35.2px;top:250.50px;font-size:12px;color:#1a1a1a;font-family:'Liberation Mono', monospace;transform:scaleX(0.95);transform-origin:0 0;-webkit-text-stroke:0.25px #1a1a1a">06/10/2025</div>
<div class="t" style="left:123.4px;top:250.50px;font-size:12px;color:#1a1a1a;font-family:'Liberation Mono', monospace;transform:scaleX(0.9480);transform-origin:0 0;-webkit-text-stroke:0.25px #1a1a1a">0610/FTSCY/WS950314741000.00bmtSEPTA KARWAN</div>
<div class="t" style="left:431.70000000000005px;width:400px;text-align:right;top:249.30px;font-size:11.7px;color:#1a1a1a;font-family:'Liberation Sans', sans-serif;-webkit-text-stroke:0.1px #1a1a1a">4.741.000,00</div>
<div class="t" style="left:696.3px;width:400px;text-align:right;top:249.98px;font-size:11.6px;color:#1a1a1a;font-family:'Liberation Sans', sans-serif;letter-spacing:0.1px;-webkit-text-stroke:0.1px #1a1a1a">692.694.907</div>
<div class="t" style="left:1042.2px;width:200px;text-align:center;top:249.11px;font-size:13px;color:#1a1a1a;font-family:'Liberation Serif', serif;letter-spacing:-0.35px;-webkit-text-stroke:0.2px #1a1a1a">1000.03</div>
<div class="t" style="left:1132.2px;width:200px;text-align:center;top:249.11px;font-size:13px;color:#1a1a1a;font-family:'Liberation Serif', serif;letter-spacing:-0.35px;-webkit-text-stroke:0.2px #1a1a1a">4000.01</div>
<div class="t" style="left:1282.0px;top:248.49px;font-size:13.5px;color:#1a1a1a;font-family:'Liberation Serif', serif;transform:scaleX(0.972);transform-origin:0 0;-webkit-text-stroke:0.2px #1a1a1a"> - Penjualan</div>
<div class="t" style="left:1755.3px;top:248.49px;font-size:13.5px;color:#1a1a1a;font-family:'Liberation Serif', serif;transform:scaleX(0.972);transform-origin:0 0;-webkit-text-stroke:0.2px #1a1a1a">Penjualan</div>
<div class="t" style="left:-370.4px;width:400px;text-align:right;top:267.04px;font-size:12px;color:#2626a6;font-family:'Liberation Sans', sans-serif;letter-spacing:-0.05px">1526</div>
<div class="t" style="left:35.2px;top:267.50px;font-size:12px;color:#1a1a1a;font-family:'Liberation Mono', monospace;transform:scaleX(0.95);transform-origin:0 0;-webkit-text-stroke:0.25px #1a1a1a">06/10/2025</div>
<div class="t" style="left:123.4px;top:267.50px;font-size:12px;color:#1a1a1a;font-family:'Liberation Mono', monospace;transform:scaleX(0.8944);transform-origin:0 0;-webkit-text-stroke:0.25px #1a1a1a">BIF TRANSFER DR 013AGUNG PRASETYO</div>
<div class="t" style="left:431.70000000000005px;width:400px;text-align:right;top:266.30px;font-size:11.7px;color:#1a1a1a;font-family:'Liberation Sans', sans-serif;-webkit-text-stroke:0.1px #1a1a1a">732.500,00</div>
<div class="t" style="left:696.3px;width:400px;text-align:right;top:266.98px;font-size:11.6px;color:#1a1a1a;font-family:'Liberation Sans', sans-serif;letter-spacing:0.1px;-webkit-text-stroke:0.1px #1a1a1a">686.427.407</div>
<div class="t" style="left:1042.2px;width:200px;text-align:center;top:266.11px;font-size:13px;color:#1a1a1a;font-family:'Liberation Serif', serif;letter-spacing:-0.35px;-webkit-text-stroke:0.2px #1a1a1a">1000.03</div>
<div class="t" style="left:1132.2px;width:200px;text-align:center;top:266.11px;font-size:13px;color:#1a1a1a;font-family:'Liberation Serif', serif;letter-spacing:-0.35px;-webkit-text-stroke:0.2px #1a1a1a">4000.01</div>
<div class="t" style="left:1282.0px;top:265.49px;font-size:13.5px;color:#1a1a1a;font-family:'Liberation Serif', serif;transform:scaleX(0.972);transform-origin:0 0;-webkit-text-stroke:0.2px #1a1a1a">Agung Prrasetyo - Penjualan</div>
<div class="t" style="left:1568.8px;top:265.49px;font-size:13.5px;color:#1a1a1a;font-family:'Liberation Serif', serif;transform:scaleX(0.972);transform-origin:0 0;-webkit-text-stroke:0.2px #1a1a1a">Agung Prrasetyo</div>
<div class="t" style="left:1755.3px;top:265.49px;font-size:13.5px;color:#1a1a1a;font-family:'Liberation Serif', serif;transform:scaleX(0.972);transform-origin:0 0;-webkit-text-stroke:0.2px #1a1a1a">Penjualan</div>
<div class="t" style="left:-370.4px;width:400px;text-align:right;top:284.04px;font-size:12px;color:#2626a6;font-family:'Liberation Sans', sans-serif;letter-spacing:-0.05px">1527</div>
<div class="t" style="left:35.2px;top:284.50px;font-size:12px;color:#1a1a1a;font-family:'Liberation Mono', monospace;transform:scaleX(0.95);transform-origin:0 0;-webkit-text-stroke:0.25px #1a1a1a">07/10/2025</div>
<div class="t" style="left:123.4px;top:284.50px;font-size:12px;color:#1a1a1a;font-family:'Liberation Mono', monospace;transform:scaleX(0.8446);transform-origin:0 0;-webkit-text-stroke:0.25px #1a1a1a">BIF TRANSFER DR 009YESI FAJAR PANGEST</div>
<div class="t" style="left:431.70000000000005px;width:400px;text-align:right;top:283.30px;font-size:11.7px;color:#1a1a1a;font-family:'Liberation Sans', sans-serif;-webkit-text-stroke:0.1px #1a1a1a">1.950.000,00</div>
<div class="t" style="left:696.3px;width:400px;text-align:right;top:283.98px;font-size:11.6px;color:#1a1a1a;font-family:'Liberation Sans', sans-serif;letter-spacing:0.1px;-webkit-text-stroke:0.1px #1a1a1a">688.377.407</div>
<div class="t" style="left:1042.2px;width:200px;text-align:center;top:283.11px;font-size:13px;color:#1a1a1a;font-family:'Liberation Serif', serif;letter-spacing:-0.35px;-webkit-text-stroke:0.2px #1a1a1a">1000.03</div>
<div class="t" style="left:1132.2px;width:200px;text-align:center;top:283.11px;font-size:13px;color:#1a1a1a;font-family:'Liberation Serif', serif;letter-spacing:-0.35px;-webkit-text-stroke:0.2px #1a1a1a">4000.01</div>
<div class="t" style="left:1282.0px;top:282.49px;font-size:13.5px;color:#1a1a1a;font-family:'Liberation Serif', serif;transform:scaleX(0.972);transform-origin:0 0;-webkit-text-stroke:0.2px #1a1a1a"> - Penjualan</div>
<div class="t" style="left:1755.3px;top:282.49px;font-size:13.5px;color:#1a1a1a;font-family:'Liberation Serif', serif;transform:scaleX(0.972);transform-origin:0 0;-webkit-text-stroke:0.2px #1a1a1a">Penjualan</div>
<div class="t" style="left:-370.4px;width:400px;text-align:right;top:301.04px;font-size:12px;color:#2626a6;font-family:'Liberation Sans', sans-serif;letter-spacing:-0.05px">1534</div>
<div class="t" style="left:35.2px;top:301.50px;font-size:12px;color:#1a1a1a;font-family:'Liberation Mono', monospace;transform:scaleX(0.95);transform-origin:0 0;-webkit-text-stroke:0.25px #1a1a1a">07/10/2025</div>
<div class="t" style="left:123.4px;top:301.50px;font-size:12px;color:#1a1a1a;font-family:'Liberation Mono', monospace;transform:scaleX(0.9042);transform-origin:0 0;-webkit-text-stroke:0.25px #1a1a1a">0710/FTSCY/WS952713950000.00boxcrushdp cam30 WIWIK SARMIYATI</div>
<div class="t" style="left:431.70000000000005px;width:400px;text-align:right;top:300.30px;font-size:11.7px;color:#1a1a1a;font-family:'Liberation Sans', sans-serif;-webkit-text-stroke:0.1px #1a1a1a">3.950.000,00</div>
<div class="t" style="left:696.3px;width:400px;text-align:right;top:300.98px;font-size:11.6px;color:#1a1a1a;font-family:'Liberation Sans', sans-serif;letter-spacing:0.1px;-webkit-text-stroke:0.1px #1a1a1a">651.731.340</div>
<div class="t" style="left:1042.2px;width:200px;text-align:center;top:300.11px;font-size:13px;color:#1a1a1a;font-family:'Liberation Serif', serif;letter-spacing:-0.35px;-webkit-text-stroke:0.2px #1a1a1a">1000.03</div>
<div class="t" style="left:1132.2px;width:200px;text-align:center;top:300.11px;font-size:13px;color:#1a1a1a;font-family:'Liberation Serif', serif;letter-spacing:-0.35px;-webkit-text-stroke:0.2px #1a1a1a">4000.01</div>
<div class="t" style="left:1282.0px;top:299.49px;font-size:13.5px;color:#1a1a1a;font-family:'Liberation Serif', serif;transform:scaleX(0.972);transform-origin:0 0;-webkit-text-stroke:0.2px #1a1a1a"> - Penjualan</div>
<div class="t" style="left:1755.3px;top:299.49px;font-size:13.5px;color:#1a1a1a;font-family:'Liberation Serif', serif;transform:scaleX(0.972);transform-origin:0 0;-webkit-text-stroke:0.2px #1a1a1a">Penjualan</div>
<div class="t" style="left:-370.4px;width:400px;text-align:right;top:318.04px;font-size:12px;color:#2626a6;font-family:'Liberation Sans', sans-serif;letter-spacing:-0.05px">1535</div>
<div class="t" style="left:35.2px;top:318.50px;font-size:12px;color:#1a1a1a;font-family:'Liberation Mono', monospace;transform:scaleX(0.95);transform-origin:0 0;-webkit-text-stroke:0.25px #1a1a1a">07/10/2025</div>
<div class="t" style="left:123.4px;top:318.50px;font-size:12px;color:#1a1a1a;font-family:'Liberation Mono', monospace;transform:scaleX(0.8771);transform-origin:0 0;-webkit-text-stroke:0.25px #1a1a1a">0710/FTSCY/WS95031898000.00belanja inv 99AGUNG PRIYANDANA I</div>
<div class="t" style="left:431.70000000000005px;width:400px;text-align:right;top:317.30px;font-size:11.7px;color:#1a1a1a;font-family:'Liberation Sans', sans-serif;-webkit-text-stroke:0.1px #1a1a1a">898.000,00</div>
<div class="t" style="left:696.3px;width:400px;text-align:right;top:317.98px;font-size:11.6px;color:#1a1a1a;font-family:'Liberation Sans', sans-serif;letter-spacing:0.1px;-webkit-text-stroke:0.1px #1a1a1a">652.629.340</div>
<div class="t" style="left:1042.2px;width:200px;text-align:center;top:317.11px;font-size:13px;color:#1a1a1a;font-family:'Liberation Serif', serif;letter-spacing:-0.35px;-webkit-text-stroke:0.2px #1a1a1a">1000.03</div>
<div class="t" style="left:1132.2px;width:200px;text-align:center;top:317.11px;font-size:13px;color:#1a1a1a;font-family:'Liberation Serif', serif;letter-spacing:-0.35px;-webkit-text-stroke:0.2px #1a1a1a">4000.01</div>
<div class="t" style="left:1282.0px;top:316.49px;font-size:13.5px;color:#1a1a1a;font-family:'Liberation Serif', serif;transform:scaleX(0.972);transform-origin:0 0;-webkit-text-stroke:0.2px #1a1a1a">Agung Priyandana - Penjualan</div>
<div class="t" style="left:1568.8px;top:316.49px;font-size:13.5px;color:#1a1a1a;font-family:'Liberation Serif', serif;transform:scaleX(0.972);transform-origin:0 0;-webkit-text-stroke:0.2px #1a1a1a">Agung Priyandana</div>
<div class="t" style="left:1755.3px;top:316.49px;font-size:13.5px;color:#1a1a1a;font-family:'Liberation Serif', serif;transform:scaleX(0.972);transform-origin:0 0;-webkit-text-stroke:0.2px #1a1a1a">Penjualan</div>
<div class="t" style="left:-370.4px;width:400px;text-align:right;top:335.04px;font-size:12px;color:#2626a6;font-family:'Liberation Sans', sans-serif;letter-spacing:-0.05px">1536</div>
<div class="t" style="left:35.2px;top:335.50px;font-size:12px;color:#1a1a1a;font-family:'Liberation Mono', monospace;transform:scaleX(0.95);transform-origin:0 0;-webkit-text-stroke:0.25px #1a1a1a">07/10/2025</div>
<div class="t" style="left:123.4px;top:335.50px;font-size:12px;color:#1a1a1a;font-family:'Liberation Mono', monospace;transform:scaleX(0.9049);transform-origin:0 0;-webkit-text-stroke:0.25px #1a1a1a">0710/FTSCY/WS950311000000.00DP 1000 box AHMAD FAIZAL</div>
<div class="t" style="left:431.70000000000005px;width:400px;text-align:right;top:334.30px;font-size:11.7px;color:#1a1a1a;font-family:'Liberation Sans', sans-serif;-webkit-text-stroke:0.1px #1a1a1a">1.000.000,00</div>
<div class="t" style="left:696.3px;width:400px;text-align:right;top:334.98px;font-size:11.6px;color:#1a1a1a;font-family:'Liberation Sans', sans-serif;letter-spacing:0.1px;-webkit-text-stroke:0.1px #1a1a1a">653.629.340</div>
<div class="t" style="left:1042.2px;width:200px;text-align:center;top:334.11px;font-size:13px;color:#1a1a1a;font-family:'Liberation Serif', serif;letter-spacing:-0.35px;-webkit-text-stroke:0.2px #1a1a1a">1000.03</div>
<div class="t" style="left:1132.2px;width:200px;text-align:center;top:334.11px;font-size:13px;color:#1a1a1a;font-family:'Liberation Serif', serif;letter-spacing:-0.35px;-webkit-text-stroke:0.2px #1a1a1a">4000.01</div>
<div class="t" style="left:1282.0px;top:333.49px;font-size:13.5px;color:#1a1a1a;font-family:'Liberation Serif', serif;transform:scaleX(0.972);transform-origin:0 0;-webkit-text-stroke:0.2px #1a1a1a">Ahmad Faizal - Penjualan</div>
<div class="t" style="left:1568.8px;top:333.49px;font-size:13.5px;color:#1a1a1a;font-family:'Liberation Serif', serif;transform:scaleX(0.972);transform-origin:0 0;-webkit-text-stroke:0.2px #1a1a1a">Ahmad Faizal</div>
<div class="t" style="left:1755.3px;top:333.49px;font-size:13.5px;color:#1a1a1a;font-family:'Liberation Serif', serif;transform:scaleX(0.972);transform-origin:0 0;-webkit-text-stroke:0.2px #1a1a1a">Penjualan</div>
<div class="t" style="left:-370.4px;width:400px;text-align:right;top:352.04px;font-size:12px;color:#2626a6;font-family:'Liberation Sans', sans-serif;letter-spacing:-0.05px">1538</div>
<div class="t" style="left:35.2px;top:352.50px;font-size:12px;color:#1a1a1a;font-family:'Liberation Mono', monospace;transform:scaleX(0.95);transform-origin:0 0;-webkit-text-stroke:0.25px #1a1a1a">08/10/2025</div>
<div class="t" style="left:123.4px;top:352.50px;font-size:12px;color:#1a1a1a;font-family:'Liberation Mono', monospace;transform:scaleX(0.8967);transform-origin:0 0;-webkit-text-stroke:0.25px #1a1a1a">BIF TRANSFER DR 008DUDI LAHMUDIN</div>
<div class="t" style="left:431.70000000000005px;width:400px;text-align:right;top:351.30px;font-size:11.7px;color:#1a1a1a;font-family:'Liberation Sans', sans-serif;-webkit-text-stroke:0.1px #1a1a1a">650.000,00</div>
<div class="t" style="left:696.3px;width:400px;text-align:right;top:351.98px;font-size:11.6px;color:#1a1a1a;font-family:'Liberation Sans', sans-serif;letter-spacing:0.1px;-webkit-text-stroke:0.1px #1a1a1a">651.028.550</div>
<div class="t" style="left:1042.2px;width:200px;text-align:center;top:351.11px;font-size:13px;color:#1a1a1a;font-family:'Liberation Serif', serif;letter-spacing:-0.35px;-webkit-text-stroke:0.2px #1a1a1a">1000.03</div>
<div class="t" style="left:1132.2px;width:200px;text-align:center;top:351.11px;font-size:13px;color:#1a1a1a;font-family:'Liberation Serif', serif;letter-spacing:-0.35px;-webkit-text-stroke:0.2px #1a1a1a">4000.01</div>
<div class="t" style="left:1282.0px;top:350.49px;font-size:13.5px;color:#1a1a1a;font-family:'Liberation Serif', serif;transform:scaleX(0.972);transform-origin:0 0;-webkit-text-stroke:0.2px #1a1a1a"> - Penjualan</div>
<div class="t" style="left:1568.8px;top:350.49px;font-size:13.5px;color:#1a1a1a;font-family:'Liberation Serif', serif;transform:scaleX(0.972);transform-origin:0 0;-webkit-text-stroke:0.2px #1a1a1a">Dudi</div>
<div class="t" style="left:1755.3px;top:350.49px;font-size:13.5px;color:#1a1a1a;font-family:'Liberation Serif', serif;transform:scaleX(0.972);transform-origin:0 0;-webkit-text-stroke:0.2px #1a1a1a">Penjualan</div>
<div class="t" style="left:-370.4px;width:400px;text-align:right;top:369.04px;font-size:12px;color:#2626a6;font-family:'Liberation Sans', sans-serif;letter-spacing:-0.05px">1539</div>
<div class="t" style="left:35.2px;top:369.50px;font-size:12px;color:#1a1a1a;font-family:'Liberation Mono', monospace;transform:scaleX(0.95);transform-origin:0 0;-webkit-text-stroke:0.25px #1a1a1a">08/10/2025</div>
<div class="t" style="left:123.4px;top:369.50px;font-size:12px;color:#1a1a1a;font-family:'Liberation Mono', monospace;transform:scaleX(0.8919);transform-origin:0 0;-webkit-text-stroke:0.25px #1a1a1a">BIF TRANSFER DR 535DIYAH AYU RAHMAWAT</div>
<div class="t" style="left:431.70000000000005px;width:400px;text-align:right;top:368.30px;font-size:11.7px;color:#1a1a1a;font-family:'Liberation Sans', sans-serif;-webkit-text-stroke:0.1px #1a1a1a">1.015.000,00</div>
<div class="t" style="left:696.3px;width:400px;text-align:right;top:368.98px;font-size:11.6px;color:#1a1a1a;font-family:'Liberation Sans', sans-serif;letter-spacing:0.1px;-webkit-text-stroke:0.1px #1a1a1a">652.043.550</div>
<div class="t" style="left:1042.2px;width:200px;text-align:center;top:368.11px;font-size:13px;color:#1a1a1a;font-family:'Liberation Serif', serif;letter-spacing:-0.35px;-webkit-text-stroke:0.2px #1a1a1a">1000.03</div>
<div class="t" style="left:1132.2px;width:200px;text-align:center;top:368.11px;font-size:13px;color:#1a1a1a;font-family:'Liberation Serif', serif;letter-spacing:-0.35px;-webkit-text-stroke:0.2px #1a1a1a">4000.01</div>
<div class="t" style="left:1282.0px;top:367.49px;font-size:13.5px;color:#1a1a1a;font-family:'Liberation Serif', serif;transform:scaleX(0.972);transform-origin:0 0;-webkit-text-stroke:0.2px #1a1a1a"> - Penjualan</div>
<div class="t" style="left:1755.3px;top:367.49px;font-size:13.5px;color:#1a1a1a;font-family:'Liberation Serif', serif;transform:scaleX(0.972);transform-origin:0 0;-webkit-text-stroke:0.2px #1a1a1a">Penjualan</div>
<div class="t" style="left:-370.4px;width:400px;text-align:right;top:386.04px;font-size:12px;color:#2626a6;font-family:'Liberation Sans', sans-serif;letter-spacing:-0.05px">1540</div>
<div class="t" style="left:35.2px;top:386.50px;font-size:12px;color:#1a1a1a;font-family:'Liberation Mono', monospace;transform:scaleX(0.95);transform-origin:0 0;-webkit-text-stroke:0.25px #1a1a1a">08/10/2025</div>
<div class="t" style="left:123.4px;top:386.50px;font-size:12px;color:#1a1a1a;font-family:'Liberation Mono', monospace;transform:scaleX(0.9167);transform-origin:0 0;-webkit-text-stroke:0.25px #1a1a1a">BIF TRANSFER DR 426ANDREI RAKHMANOV</div>
<div class="t" style="left:431.70000000000005px;width:400px;text-align:right;top:385.30px;font-size:11.7px;color:#1a1a1a;font-family:'Liberation Sans', sans-serif;-webkit-text-stroke:0.1px #1a1a1a">2.550.000,00</div>
<div class="t" style="left:696.3px;width:400px;text-align:right;top:385.98px;font-size:11.6px;color:#1a1a1a;font-family:'Liberation Sans', sans-serif;letter-spacing:0.1px;-webkit-text-stroke:0.1px #1a1a1a">654.593.550</div>
<div class="t" style="left:1042.2px;width:200px;text-align:center;top:385.11px;font-size:13px;color:#1a1a1a;font-family:'Liberation Serif', serif;letter-spacing:-0.35px;-webkit-text-stroke:0.2px #1a1a1a">1000.03</div>
<div class="t" style="left:1132.2px;width:200px;text-align:center;top:385.11px;font-size:13px;color:#1a1a1a;font-family:'Liberation Serif', serif;letter-spacing:-0.35px;-webkit-text-stroke:0.2px #1a1a1a">4000.01</div>
<div class="t" style="left:1282.0px;top:384.49px;font-size:13.5px;color:#1a1a1a;font-family:'Liberation Serif', serif;transform:scaleX(0.972);transform-origin:0 0;-webkit-text-stroke:0.2px #1a1a1a"> - Penjualan</div>
<div class="t" style="left:1755.3px;top:384.49px;font-size:13.5px;color:#1a1a1a;font-family:'Liberation Serif', serif;transform:scaleX(0.972);transform-origin:0 0;-webkit-text-stroke:0.2px #1a1a1a">Penjualan</div>
<div class="t" style="left:-370.4px;width:400px;text-align:right;top:403.04px;font-size:12px;color:#2626a6;font-family:'Liberation Sans', sans-serif;letter-spacing:-0.05px">1544</div>
<div class="t" style="left:35.2px;top:403.50px;font-size:12px;color:#1a1a1a;font-family:'Liberation Mono', monospace;transform:scaleX(0.95);transform-origin:0 0;-webkit-text-stroke:0.25px #1a1a1a">09/10/2025</div>
<div class="t" style="left:123.4px;top:403.50px;font-size:12px;color:#1a1a1a;font-family:'Liberation Mono', monospace;transform:scaleX(0.8630);transform-origin:0 0;-webkit-text-stroke:0.25px #1a1a1a">0910/FTSCY/WS95031739400.00kardus double cust omELISA PUTRI</div>
<div class="t" style="left:431.70000000000005px;width:400px;text-align:right;top:402.30px;font-size:11.7px;color:#1a1a1a;font-family:'Liberation Sans', sans-serif;-webkit-text-stroke:0.1px #1a1a1a">739.400,00</div>
<div class="t" style="left:696.3px;width:400px;text-align:right;top:402.98px;font-size:11.6px;color:#1a1a1a;font-family:'Liberation Sans', sans-serif;letter-spacing:0.1px;-webkit-text-stroke:0.1px #1a1a1a">651.094.854</div>
<div class="t" style="left:1042.2px;width:200px;text-align:center;top:402.11px;font-size:13px;color:#1a1a1a;font-family:'Liberation Serif', serif;letter-spacing:-0.35px;-webkit-text-stroke:0.2px #1a1a1a">1000.03</div>
<div class="t" style="left:1132.2px;width:200px;text-align:center;top:402.11px;font-size:13px;color:#1a1a1a;font-family:'Liberation Serif', serif;letter-spacing:-0.35px;-webkit-text-stroke:0.2px #1a1a1a">4000.01</div>
<div class="t" style="left:1282.0px;top:401.49px;font-size:13.5px;color:#1a1a1a;font-family:'Liberation Serif', serif;transform:scaleX(0.972);transform-origin:0 0;-webkit-text-stroke:0.2px #1a1a1a"> - Penjualan</div>
<div class="t" style="left:1755.3px;top:401.49px;font-size:13.5px;color:#1a1a1a;font-family:'Liberation Serif', serif;transform:scaleX(0.972);transform-origin:0 0;-webkit-text-stroke:0.2px #1a1a1a">Penjualan</div>
<div class="t" style="left:-370.4px;width:400px;text-align:right;top:420.04px;font-size:12px;color:#2626a6;font-family:'Liberation Sans', sans-serif;letter-spacing:-0.05px">1545</div>
<div class="t" style="left:35.2px;top:420.50px;font-size:12px;color:#1a1a1a;font-family:'Liberation Mono', monospace;transform:scaleX(0.95);transform-origin:0 0;-webkit-text-stroke:0.25px #1a1a1a">09/10/2025</div>
<div class="t" style="left:123.4px;top:420.50px;font-size:12px;color:#1a1a1a;font-family:'Liberation Mono', monospace;transform:scaleX(0.9284);transform-origin:0 0;-webkit-text-stroke:0.25px #1a1a1a">0910/FTSCY/WS950312400000.00MOCH RABIYUL AFFAN</div>
<div class="t" style="left:431.70000000000005px;width:400px;text-align:right;top:419.30px;font-size:11.7px;color:#1a1a1a;font-family:'Liberation Sans', sans-serif;-webkit-text-stroke:0.1px #1a1a1a">2.400.000,00</div>
<div class="t" style="left:696.3px;width:400px;text-align:right;top:419.98px;font-size:11.6px;color:#1a1a1a;font-family:'Liberation Sans', sans-serif;letter-spacing:0.1px;-webkit-text-stroke:0.1px #1a1a1a">653.494.854</div>
<div class="t" style="left:1042.2px;width:200px;text-align:center;top:419.11px;font-size:13px;color:#1a1a1a;font-family:'Liberation Serif', serif;letter-spacing:-0.35px;-webkit-text-stroke:0.2px #1a1a1a">1000.03</div>
<div class="t" style="left:1132.2px;width:200px;text-align:center;top:419.11px;font-size:13px;color:#1a1a1a;font-family:'Liberation Serif', serif;letter-spacing:-0.35px;-webkit-text-stroke:0.2px #1a1a1a">4000.01</div>
<div class="t" style="left:1282.0px;top:418.49px;font-size:13.5px;color:#1a1a1a;font-family:'Liberation Serif', serif;transform:scaleX(0.972);transform-origin:0 0;-webkit-text-stroke:0.2px #1a1a1a"> - Penjualan</div>
<div class="t" style="left:1755.3px;top:418.49px;font-size:13.5px;color:#1a1a1a;font-family:'Liberation Serif', serif;transform:scaleX(0.972);transform-origin:0 0;-webkit-text-stroke:0.2px #1a1a1a">Penjualan</div>
<div class="t" style="left:-370.4px;width:400px;text-align:right;top:437.04px;font-size:12px;color:#2626a6;font-family:'Liberation Sans', sans-serif;letter-spacing:-0.05px">1549</div>
<div class="t" style="left:35.2px;top:437.50px;font-size:12px;color:#1a1a1a;font-family:'Liberation Mono', monospace;transform:scaleX(0.95);transform-origin:0 0;-webkit-text-stroke:0.25px #1a1a1a">09/10/2025</div>
<div class="t" style="left:123.4px;top:437.50px;font-size:12px;color:#1a1a1a;font-family:'Liberation Mono', monospace;transform:scaleX(0.8944);transform-origin:0 0;-webkit-text-stroke:0.25px #1a1a1a">BIF TRANSFER DR 013AGUNG PRASETYO</div>
<div class="t" style="left:431.70000000000005px;width:400px;text-align:right;top:436.30px;font-size:11.7px;color:#1a1a1a;font-family:'Liberation Sans', sans-serif;-webkit-text-stroke:0.1px #1a1a1a">625.000,00</div>
<div class="t" style="left:696.3px;width:400px;text-align:right;top:436.98px;font-size:11.6px;color:#1a1a1a;font-family:'Liberation Sans', sans-serif;letter-spacing:0.1px;-webkit-text-stroke:0.1px #1a1a1a">654.226.654</div>
<div class="t" style="left:1042.2px;width:200px;text-align:center;top:436.11px;font-size:13px;color:#1a1a1a;font-family:'Liberation Serif', serif;letter-spacing:-0.35px;-webkit-text-stroke:0.2px #1a1a1a">1000.03</div>
<div class="t" style="left:1132.2px;width:200px;text-align:center;top:436.11px;font-size:13px;color:#1a1a1a;font-family:'Liberation Serif', serif;letter-spacing:-0.35px;-webkit-text-stroke:0.2px #1a1a1a">4000.01</div>
<div class="t" style="left:1282.0px;top:435.49px;font-size:13.5px;color:#1a1a1a;font-family:'Liberation Serif', serif;transform:scaleX(0.972);transform-origin:0 0;-webkit-text-stroke:0.2px #1a1a1a">Agung Prrasetyo - Penjualan</div>
<div class="t" style="left:1568.8px;top:435.49px;font-size:13.5px;color:#1a1a1a;font-family:'Liberation Serif', serif;transform:scaleX(0.972);transform-origin:0 0;-webkit-text-stroke:0.2px #1a1a1a">Agung Prrasetyo</div>
<div class="t" style="left:1755.3px;top:435.49px;font-size:13.5px;color:#1a1a1a;font-family:'Liberation Serif', serif;transform:scaleX(0.972);transform-origin:0 0;-webkit-text-stroke:0.2px #1a1a1a">Penjualan</div>
<div class="t" style="left:-370.4px;width:400px;text-align:right;top:454.04px;font-size:12px;color:#2626a6;font-family:'Liberation Sans', sans-serif;letter-spacing:-0.05px">1552</div>
<div class="t" style="left:35.2px;top:454.50px;font-size:12px;color:#1a1a1a;font-family:'Liberation Mono', monospace;transform:scaleX(0.95);transform-origin:0 0;-webkit-text-stroke:0.25px #1a1a1a">10/10/2025</div>
<div class="t" style="left:123.4px;top:454.50px;font-size:12px;color:#1a1a1a;font-family:'Liberation Mono', monospace;transform:scaleX(0.8779);transform-origin:0 0;-webkit-text-stroke:0.25px #1a1a1a">1010/FTSCY/WS95031230000.00atas nama doloni AANG NUGRAHINI</div>
<div class="t" style="left:431.70000000000005px;width:400px;text-align:right;top:453.30px;font-size:11.7px;color:#1a1a1a;font-family:'Liberation Sans', sans-serif;-webkit-text-stroke:0.1px #1a1a1a">230.000,00</div>
<div class="t" style="left:696.3px;width:400px;text-align:right;top:453.98px;font-size:11.6px;color:#1a1a1a;font-family:'Liberation Sans', sans-serif;letter-spacing:0.1px;-webkit-text-stroke:0.1px #1a1a1a">653.138.494</div>
<div class="t" style="left:1042.2px;width:200px;text-align:center;top:453.11px;font-size:13px;color:#1a1a1a;font-family:'Liberation Serif', serif;letter-spacing:-0.35px;-webkit-text-stroke:0.2px #1a1a1a">1000.03</div>
<div class="t" style="left:1132.2px;width:200px;text-align:center;top:453.11px;font-size:13px;color:#1a1a1a;font-family:'Liberation Serif', serif;letter-spacing:-0.35px;-webkit-text-stroke:0.2px #1a1a1a">4000.01</div>
<div class="t" style="left:1282.0px;top:452.49px;font-size:13.5px;color:#1a1a1a;font-family:'Liberation Serif', serif;transform:scaleX(0.972);transform-origin:0 0;-webkit-text-stroke:0.2px #1a1a1a">Aang Nugrahini - Penjualan</div>
<div class="t" style="left:1568.8px;top:452.49px;font-size:13.5px;color:#1a1a1a;font-family:'Liberation Serif', serif;transform:scaleX(0.972);transform-origin:0 0;-webkit-text-stroke:0.2px #1a1a1a">Aang Nugrahini</div>
<div class="t" style="left:1755.3px;top:452.49px;font-size:13.5px;color:#1a1a1a;font-family:'Liberation Serif', serif;transform:scaleX(0.972);transform-origin:0 0;-webkit-text-stroke:0.2px #1a1a1a">Penjualan</div>
<div class="t" style="left:-370.4px;width:400px;text-align:right;top:471.04px;font-size:12px;color:#2626a6;font-family:'Liberation Sans', sans-serif;letter-spacing:-0.05px">1556</div>
<div class="t" style="left:35.2px;top:471.50px;font-size:12px;color:#1a1a1a;font-family:'Liberation Mono', monospace;transform:scaleX(0.95);transform-origin:0 0;-webkit-text-stroke:0.25px #1a1a1a">11/10/2025</div>
<div class="t" style="left:123.4px;top:471.50px;font-size:12px;color:#1a1a1a;font-family:'Liberation Mono', monospace;transform:scaleX(0.8737);transform-origin:0 0;-webkit-text-stroke:0.25px #1a1a1a">BIF TRANSFER DR 008DEVI SAPUTRA</div>
<div class="t" style="left:431.70000000000005px;width:400px;text-align:right;top:470.30px;font-size:11.7px;color:#1a1a1a;font-family:'Liberation Sans', sans-serif;-webkit-text-stroke:0.1px #1a1a1a">885.000,00</div>
<div class="t" style="left:696.3px;width:400px;text-align:right;top:470.98px;font-size:11.6px;color:#1a1a1a;font-family:'Liberation Sans', sans-serif;letter-spacing:0.1px;-webkit-text-stroke:0.1px #1a1a1a">643.741.594</div>
<div class="t" style="left:1042.2px;width:200px;text-align:center;top:470.11px;font-size:13px;color:#1a1a1a;font-family:'Liberation Serif', serif;letter-spacing:-0.35px;-webkit-text-stroke:0.2px #1a1a1a">1000.03</div>
<div class="t" style="left:1132.2px;width:200px;text-align:center;top:470.11px;font-size:13px;color:#1a1a1a;font-family:'Liberation Serif', serif;letter-spacing:-0.35px;-webkit-text-stroke:0.2px #1a1a1a">4000.01</div>
<div class="t" style="left:1282.0px;top:469.49px;font-size:13.5px;color:#1a1a1a;font-family:'Liberation Serif', serif;transform:scaleX(0.972);transform-origin:0 0;-webkit-text-stroke:0.2px #1a1a1a">Devi Saputra - Penjualan</div>
<div class="t" style="left:1568.8px;top:469.49px;font-size:13.5px;color:#1a1a1a;font-family:'Liberation Serif', serif;transform:scaleX(0.972);transform-origin:0 0;-webkit-text-stroke:0.2px #1a1a1a">Devi Saputra</div>
<div class="t" style="left:1755.3px;top:469.49px;font-size:13.5px;color:#1a1a1a;font-family:'Liberation Serif', serif;transform:scaleX(0.972);transform-origin:0 0;-webkit-text-stroke:0.2px #1a1a1a">Penjualan</div>
<div class="t" style="left:-370.4px;width:400px;text-align:right;top:488.04px;font-size:12px;color:#2626a6;font-family:'Liberation Sans', sans-serif;letter-spacing:-0.05px">1557</div>
<div class="t" style="left:35.2px;top:488.50px;font-size:12px;color:#1a1a1a;font-family:'Liberation Mono', monospace;transform:scaleX(0.95);transform-origin:0 0;-webkit-text-stroke:0.25px #1a1a1a">11/10/2025</div>
<div class="t" style="left:123.4px;top:488.50px;font-size:12px;color:#1a1a1a;font-family:'Liberation Mono', monospace;transform:scaleX(0.8917);transform-origin:0 0;-webkit-text-stroke:0.25px #1a1a1a">1110/FTSCY/WS952712150000.00DP SnackBox Quekie ANDY SYAFRAN</div>
<div class="t" style="left:431.70000000000005px;width:400px;text-align:right;top:487.30px;font-size:11.7px;color:#1a1a1a;font-family:'Liberation Sans', sans-serif;-webkit-text-stroke:0.1px #1a1a1a">2.150.000,00</div>
<div class="t" style="left:696.3px;width:400px;text-align:right;top:487.98px;font-size:11.6px;color:#1a1a1a;font-family:'Liberation Sans', sans-serif;letter-spacing:0.1px;-webkit-text-stroke:0.1px #1a1a1a">645.891.594</div>
<div class="t" style="left:1042.2px;width:200px;text-align:center;top:487.11px;font-size:13px;color:#1a1a1a;font-family:'Liberation Serif', serif;letter-spacing:-0.35px;-webkit-text-stroke:0.2px #1a1a1a">1000.03</div>
<div class="t" style="left:1132.2px;width:200px;text-align:center;top:487.11px;font-size:13px;color:#1a1a1a;font-family:'Liberation Serif', serif;letter-spacing:-0.35px;-webkit-text-stroke:0.2px #1a1a1a">4000.01</div>
<div class="t" style="left:1282.0px;top:486.49px;font-size:13.5px;color:#1a1a1a;font-family:'Liberation Serif', serif;transform:scaleX(0.972);transform-origin:0 0;-webkit-text-stroke:0.2px #1a1a1a">Andy Syafran - Penjualan</div>
<div class="t" style="left:1568.8px;top:486.49px;font-size:13.5px;color:#1a1a1a;font-family:'Liberation Serif', serif;transform:scaleX(0.972);transform-origin:0 0;-webkit-text-stroke:0.2px #1a1a1a">Andy Syafran</div>
<div class="t" style="left:1755.3px;top:486.49px;font-size:13.5px;color:#1a1a1a;font-family:'Liberation Serif', serif;transform:scaleX(0.972);transform-origin:0 0;-webkit-text-stroke:0.2px #1a1a1a">Penjualan</div>
<div class="t" style="left:-370.4px;width:400px;text-align:right;top:505.04px;font-size:12px;color:#2626a6;font-family:'Liberation Sans', sans-serif;letter-spacing:-0.05px">1581</div>
<div class="t" style="left:35.2px;top:505.50px;font-size:12px;color:#1a1a1a;font-family:'Liberation Mono', monospace;transform:scaleX(0.95);transform-origin:0 0;-webkit-text-stroke:0.25px #1a1a1a">11/10/2025</div>
<div class="t" style="left:123.4px;top:505.50px;font-size:12px;color:#1a1a1a;font-family:'Liberation Mono', monospace;transform:scaleX(0.9357);transform-origin:0 0;-webkit-text-stroke:0.25px #1a1a1a">1110/FTSCY/WS952711192500.00ANITA SUKMAWATI</div>
<div class="t" style="left:431.70000000000005px;width:400px;text-align:right;top:504.30px;font-size:11.7px;color:#1a1a1a;font-family:'Liberation Sans', sans-serif;-webkit-text-stroke:0.1px #1a1a1a">1.192.500,00</div>
<div class="t" style="left:696.3px;width:400px;text-align:right;top:504.98px;font-size:11.6px;color:#1a1a1a;font-family:'Liberation Sans', sans-serif;letter-spacing:0.1px;-webkit-text-stroke:0.1px #1a1a1a">620.358.594</div>
<div class="t" style="left:1042.2px;width:200px;text-align:center;top:504.11px;font-size:13px;color:#1a1a1a;font-family:'Liberation Serif', serif;letter-spacing:-0.35px;-webkit-text-stroke:0.2px #1a1a1a">1000.03</div>
<div class="t" style="left:1132.2px;width:200px;text-align:center;top:504.11px;font-size:13px;color:#1a1a1a;font-family:'Liberation Serif', serif;letter-spacing:-0.35px;-webkit-text-stroke:0.2px #1a1a1a">4000.01</div>
<div class="t" style="left:1282.0px;top:503.49px;font-size:13.5px;color:#1a1a1a;font-family:'Liberation Serif', serif;transform:scaleX(0.972);transform-origin:0 0;-webkit-text-stroke:0.2px #1a1a1a">Anita Sukmawati - Penjualan</div>
<div class="t" style="left:1568.8px;top:503.49px;font-size:13.5px;color:#1a1a1a;font-family:'Liberation Serif', serif;transform:scaleX(0.972);transform-origin:0 0;-webkit-text-stroke:0.2px #1a1a1a">Anita Sukmawati</div>
<div class="t" style="left:1755.3px;top:503.49px;font-size:13.5px;color:#1a1a1a;font-family:'Liberation Serif', serif;transform:scaleX(0.972);transform-origin:0 0;-webkit-text-stroke:0.2px #1a1a1a">Penjualan</div>
<div class="t" style="left:-370.4px;width:400px;text-align:right;top:522.04px;font-size:12px;color:#2626a6;font-family:'Liberation Sans', sans-serif;letter-spacing:-0.05px">1582</div>
<div class="t" style="left:35.2px;top:522.50px;font-size:12px;color:#1a1a1a;font-family:'Liberation Mono', monospace;transform:scaleX(0.95);transform-origin:0 0;-webkit-text-stroke:0.25px #1a1a1a">12/10/2025</div>
<div class="t" style="left:123.4px;top:522.50px;font-size:12px;color:#1a1a1a;font-family:'Liberation Mono', monospace;transform:scaleX(0.8629);transform-origin:0 0;-webkit-text-stroke:0.25px #1a1a1a">BIF TRANSFER DR 002DEDI JUNAEDI</div>
<div class="t" style="left:431.70000000000005px;width:400px;text-align:right;top:521.30px;font-size:11.7px;color:#1a1a1a;font-family:'Liberation Sans', sans-serif;-webkit-text-stroke:0.1px #1a1a1a">6.600.000,00</div>
<div class="t" style="left:696.3px;width:400px;text-align:right;top:521.98px;font-size:11.6px;color:#1a1a1a;font-family:'Liberation Sans', sans-serif;letter-spacing:0.1px;-webkit-text-stroke:0.1px #1a1a1a">626.958.594</div>
<div class="t" style="left:1042.2px;width:200px;text-align:center;top:521.11px;font-size:13px;color:#1a1a1a;font-family:'Liberation Serif', serif;letter-spacing:-0.35px;-webkit-text-stroke:0.2px #1a1a1a">1000.03</div>
<div class="t" style="left:1132.2px;width:200px;text-align:center;top:521.11px;font-size:13px;color:#1a1a1a;font-family:'Liberation Serif', serif;letter-spacing:-0.35px;-webkit-text-stroke:0.2px #1a1a1a">4000.01</div>
<div class="t" style="left:1282.0px;top:520.49px;font-size:13.5px;color:#1a1a1a;font-family:'Liberation Serif', serif;transform:scaleX(0.972);transform-origin:0 0;-webkit-text-stroke:0.2px #1a1a1a">Dedi Junaedi - Penjualan</div>
<div class="t" style="left:1568.8px;top:520.49px;font-size:13.5px;color:#1a1a1a;font-family:'Liberation Serif', serif;transform:scaleX(0.972);transform-origin:0 0;-webkit-text-stroke:0.2px #1a1a1a">Dedi Junaedi</div>
<div class="t" style="left:1755.3px;top:520.49px;font-size:13.5px;color:#1a1a1a;font-family:'Liberation Serif', serif;transform:scaleX(0.972);transform-origin:0 0;-webkit-text-stroke:0.2px #1a1a1a">Penjualan</div>
<div class="t" style="left:-370.4px;width:400px;text-align:right;top:539.04px;font-size:12px;color:#2626a6;font-family:'Liberation Sans', sans-serif;letter-spacing:-0.05px">1587</div>
<div class="t" style="left:35.2px;top:539.50px;font-size:12px;color:#1a1a1a;font-family:'Liberation Mono', monospace;transform:scaleX(0.95);transform-origin:0 0;-webkit-text-stroke:0.25px #1a1a1a">14/10/2025</div>
<div class="t" style="left:123.4px;top:539.50px;font-size:12px;color:#1a1a1a;font-family:'Liberation Mono', monospace;transform:scaleX(1.0076);transform-origin:0 0;-webkit-text-stroke:0.25px #1a1a1a">NTRF@963167870X0Z6 805@BCA25101700307@@AFR</div>
<div class="t" style="left:431.70000000000005px;width:400px;text-align:right;top:538.30px;font-size:11.7px;color:#1a1a1a;font-family:'Liberation Sans', sans-serif;-webkit-text-stroke:0.1px #1a1a1a">149.000,00</div>
<div class="t" style="left:696.3px;width:400px;text-align:right;top:538.98px;font-size:11.6px;color:#1a1a1a;font-family:'Liberation Sans', sans-serif;letter-spacing:0.1px;-webkit-text-stroke:0.1px #1a1a1a">605.201.789</div>
<div class="t" style="left:1042.2px;width:200px;text-align:center;top:538.11px;font-size:13px;color:#1a1a1a;font-family:'Liberation Serif', serif;letter-spacing:-0.35px;-webkit-text-stroke:0.2px #1a1a1a">1000.03</div>
<div class="t" style="left:1132.2px;width:200px;text-align:center;top:538.11px;font-size:13px;color:#1a1a1a;font-family:'Liberation Serif', serif;letter-spacing:-0.35px;-webkit-text-stroke:0.2px #1a1a1a">4000.01</div>
<div class="t" style="left:1282.0px;top:537.49px;font-size:13.5px;color:#1a1a1a;font-family:'Liberation Serif', serif;transform:scaleX(0.972);transform-origin:0 0;-webkit-text-stroke:0.2px #1a1a1a">AFR - Penjualan</div>
<div class="t" style="left:1568.8px;top:537.49px;font-size:13.5px;color:#1a1a1a;font-family:'Liberation Serif', serif;transform:scaleX(0.972);transform-origin:0 0;-webkit-text-stroke:0.2px #1a1a1a">AFR</div>
<div class="t" style="left:1755.3px;top:537.49px;font-size:13.5px;color:#1a1a1a;font-family:'Liberation Serif', serif;transform:scaleX(0.972);transform-origin:0 0;-webkit-text-stroke:0.2px #1a1a1a">Penjualan</div>
<div class="t" style="left:-370.4px;width:400px;text-align:right;top:556.04px;font-size:12px;color:#2626a6;font-family:'Liberation Sans', sans-serif;letter-spacing:-0.05px">1595</div>
<div class="t" style="left:35.2px;top:556.50px;font-size:12px;color:#1a1a1a;font-family:'Liberation Mono', monospace;transform:scaleX(0.95);transform-origin:0 0;-webkit-text-stroke:0.25px #1a1a1a">15/10/2025</div>
<div class="t" style="left:123.4px;top:556.50px;font-size:12px;color:#1a1a1a;font-family:'Liberation Mono', monospace;transform:scaleX(0.9140);transform-origin:0 0;-webkit-text-stroke:0.25px #1a1a1a">1510/FTSCY/WS952714106500.00boxcam31A TITIK HANDAYANI</div>
<div class="t" style="left:431.70000000000005px;width:400px;text-align:right;top:555.30px;font-size:11.7px;color:#1a1a1a;font-family:'Liberation Sans', sans-serif;-webkit-text-stroke:0.1px #1a1a1a">4.106.500,00</div>
<div class="t" style="left:696.3px;width:400px;text-align:right;top:555.98px;font-size:11.6px;color:#1a1a1a;font-family:'Liberation Sans', sans-serif;letter-spacing:0.1px;-webkit-text-stroke:0.1px #1a1a1a">570.769.411</div>
<div class="t" style="left:1042.2px;width:200px;text-align:center;top:555.11px;font-size:13px;color:#1a1a1a;font-family:'Liberation Serif', serif;letter-spacing:-0.35px;-webkit-text-stroke:0.2px #1a1a1a">1000.03</div>
<div class="t" style="left:1132.2px;width:200px;text-align:center;top:555.11px;font-size:13px;color:#1a1a1a;font-family:'Liberation Serif', serif;letter-spacing:-0.35px;-webkit-text-stroke:0.2px #1a1a1a">4000.01</div>
<div class="t" style="left:1282.0px;top:554.49px;font-size:13.5px;color:#1a1a1a;font-family:'Liberation Serif', serif;transform:scaleX(0.972);transform-origin:0 0;-webkit-text-stroke:0.2px #1a1a1a">Titik Handayani - Penjualan</div>
<div class="t" style="left:1568.8px;top:554.49px;font-size:13.5px;color:#1a1a1a;font-family:'Liberation Serif', serif;transform:scaleX(0.972);transform-origin:0 0;-webkit-text-stroke:0.2px #1a1a1a">Titik Handayani</div>
<div class="t" style="left:1755.3px;top:554.49px;font-size:13.5px;color:#1a1a1a;font-family:'Liberation Serif', serif;transform:scaleX(0.972);transform-origin:0 0;-webkit-text-stroke:0.2px #1a1a1a">Penjualan</div>
<div class="t" style="left:-370.4px;width:400px;text-align:right;top:573.04px;font-size:12px;color:#2626a6;font-family:'Liberation Sans', sans-serif;letter-spacing:-0.05px">1597</div>
<div class="t" style="left:35.2px;top:573.50px;font-size:12px;color:#1a1a1a;font-family:'Liberation Mono', monospace;transform:scaleX(0.95);transform-origin:0 0;-webkit-text-stroke:0.25px #1a1a1a">16/10/2025</div>
<div class="t" style="left:123.4px;top:573.50px;font-size:12px;color:#1a1a1a;font-family:'Liberation Mono', monospace;transform:scaleX(0.9167);transform-origin:0 0;-webkit-text-stroke:0.25px #1a1a1a">BIF TRANSFER DR 426ANDREI RAKHMANOV</div>
<div class="t" style="left:431.70000000000005px;width:400px;text-align:right;top:572.30px;font-size:11.7px;color:#1a1a1a;font-family:'Liberation Sans', sans-serif;-webkit-text-stroke:0.1px #1a1a1a">166.000,00</div>
<div class="t" style="left:696.3px;width:400px;text-align:right;top:572.98px;font-size:11.6px;color:#1a1a1a;font-family:'Liberation Sans', sans-serif;letter-spacing:0.1px;-webkit-text-stroke:0.1px #1a1a1a">569.935.411</div>
<div class="t" style="left:1042.2px;width:200px;text-align:center;top:572.11px;font-size:13px;color:#1a1a1a;font-family:'Liberation Serif', serif;letter-spacing:-0.35px;-webkit-text-stroke:0.2px #1a1a1a">1000.03</div>
<div class="t" style="left:1132.2px;width:200px;text-align:center;top:572.11px;font-size:13px;color:#1a1a1a;font-family:'Liberation Serif', serif;letter-spacing:-0.35px;-webkit-text-stroke:0.2px #1a1a1a">4000.01</div>
<div class="t" style="left:1282.0px;top:571.49px;font-size:13.5px;color:#1a1a1a;font-family:'Liberation Serif', serif;transform:scaleX(0.972);transform-origin:0 0;-webkit-text-stroke:0.2px #1a1a1a">Andrei Rakhmanov - Penjualan</div>
<div class="t" style="left:1568.8px;top:571.49px;font-size:13.5px;color:#1a1a1a;font-family:'Liberation Serif', serif;transform:scaleX(0.972);transform-origin:0 0;-webkit-text-stroke:0.2px #1a1a1a">Andrei Rakhmanov</div>
<div class="t" style="left:1755.3px;top:571.49px;font-size:13.5px;color:#1a1a1a;font-family:'Liberation Serif', serif;transform:scaleX(0.972);transform-origin:0 0;-webkit-text-stroke:0.2px #1a1a1a">Penjualan</div>
<div class="t" style="left:-370.4px;width:400px;text-align:right;top:590.04px;font-size:12px;color:#2626a6;font-family:'Liberation Sans', sans-serif;letter-spacing:-0.05px">1599</div>
<div class="t" style="left:35.2px;top:590.50px;font-size:12px;color:#1a1a1a;font-family:'Liberation Mono', monospace;transform:scaleX(0.95);transform-origin:0 0;-webkit-text-stroke:0.25px #1a1a1a">16/10/2025</div>
<div class="t" style="left:123.4px;top:590.50px;font-size:12px;color:#1a1a1a;font-family:'Liberation Mono', monospace;transform:scaleX(0.8806);transform-origin:0 0;-webkit-text-stroke:0.25px #1a1a1a">BIF TRANSFER DR 008ERNA HERLIANA</div>
<div class="t" style="left:431.70000000000005px;width:400px;text-align:right;top:589.30px;font-size:11.7px;color:#1a1a1a;font-family:'Liberation Sans', sans-serif;-webkit-text-stroke:0.1px #1a1a1a">1.272.400,00</div>
<div class="t" style="left:696.3px;width:400px;text-align:right;top:589.98px;font-size:11.6px;color:#1a1a1a;font-family:'Liberation Sans', sans-serif;letter-spacing:0.1px;-webkit-text-stroke:0.1px #1a1a1a">570.701.811</div>
<div class="t" style="left:1042.2px;width:200px;text-align:center;top:589.11px;font-size:13px;color:#1a1a1a;font-family:'Liberation Serif', serif;letter-spacing:-0.35px;-webkit-text-stroke:0.2px #1a1a1a">1000.03</div>
<div class="t" style="left:1132.2px;width:200px;text-align:center;top:589.11px;font-size:13px;color:#1a1a1a;font-family:'Liberation Serif', serif;letter-spacing:-0.35px;-webkit-text-stroke:0.2px #1a1a1a">4000.01</div>
<div class="t" style="left:1282.0px;top:588.49px;font-size:13.5px;color:#1a1a1a;font-family:'Liberation Serif', serif;transform:scaleX(0.972);transform-origin:0 0;-webkit-text-stroke:0.2px #1a1a1a">Erna Herliana - Penjualan</div>
<div class="t" style="left:1568.8px;top:588.49px;font-size:13.5px;color:#1a1a1a;font-family:'Liberation Serif', serif;transform:scaleX(0.972);transform-origin:0 0;-webkit-text-stroke:0.2px #1a1a1a">Erna Herliana</div>
<div class="t" style="left:1755.3px;top:588.49px;font-size:13.5px;color:#1a1a1a;font-family:'Liberation Serif', serif;transform:scaleX(0.972);transform-origin:0 0;-webkit-text-stroke:0.2px #1a1a1a">Penjualan</div>
<div class="t" style="left:-370.4px;width:400px;text-align:right;top:607.04px;font-size:12px;color:#2626a6;font-family:'Liberation Sans', sans-serif;letter-spacing:-0.05px">1600</div>
<div class="t" style="left:35.2px;top:607.50px;font-size:12px;color:#1a1a1a;font-family:'Liberation Mono', monospace;transform:scaleX(0.95);transform-origin:0 0;-webkit-text-stroke:0.25px #1a1a1a">16/10/2025</div>
<div class="t" style="left:123.4px;top:607.50px;font-size:12px;color:#1a1a1a;font-family:'Liberation Mono', monospace;transform:scaleX(0.9282);transform-origin:0 0;-webkit-text-stroke:0.25px #1a1a1a">1610/FTSCY/WS950317348000.00KUSNADI AZHARI</div>
<div class="t" style="left:431.70000000000005px;width:400px;text-align:right;top:606.30px;font-size:11.7px;color:#1a1a1a;font-family:'Liberation Sans', sans-serif;-webkit-text-stroke:0.1px #1a1a1a">7.348.000,00</div>
<div class="t" style="left:696.3px;width:400px;text-align:right;top:606.98px;font-size:11.6px;color:#1a1a1a;font-family:'Liberation Sans', sans-serif;letter-spacing:0.1px;-webkit-text-stroke:0.1px #1a1a1a">578.049.811</div>
<div class="t" style="left:1042.2px;width:200px;text-align:center;top:606.11px;font-size:13px;color:#1a1a1a;font-family:'Liberation Serif', serif;letter-spacing:-0.35px;-webkit-text-stroke:0.2px #1a1a1a">1000.03</div>
<div class="t" style="left:1132.2px;width:200px;text-align:center;top:606.11px;font-size:13px;color:#1a1a1a;font-family:'Liberation Serif', serif;letter-spacing:-0.35px;-webkit-text-stroke:0.2px #1a1a1a">4000.01</div>
<div class="t" style="left:1282.0px;top:605.49px;font-size:13.5px;color:#1a1a1a;font-family:'Liberation Serif', serif;transform:scaleX(0.972);transform-origin:0 0;-webkit-text-stroke:0.2px #1a1a1a">Kusnadi Azhari - Penjualan</div>
<div class="t" style="left:1568.8px;top:605.49px;font-size:13.5px;color:#1a1a1a;font-family:'Liberation Serif', serif;transform:scaleX(0.972);transform-origin:0 0;-webkit-text-stroke:0.2px #1a1a1a">Kusnadi Azhari</div>
<div class="t" style="left:1755.3px;top:605.49px;font-size:13.5px;color:#1a1a1a;font-family:'Liberation Serif', serif;transform:scaleX(0.972);transform-origin:0 0;-webkit-text-stroke:0.2px #1a1a1a">Penjualan</div>
<div class="t" style="left:-370.4px;width:400px;text-align:right;top:624.04px;font-size:12px;color:#2626a6;font-family:'Liberation Sans', sans-serif;letter-spacing:-0.05px">1602</div>
<div class="t" style="left:35.2px;top:624.50px;font-size:12px;color:#1a1a1a;font-family:'Liberation Mono', monospace;transform:scaleX(0.95);transform-origin:0 0;-webkit-text-stroke:0.25px #1a1a1a">17/10/2025</div>
<div class="t" style="left:123.4px;top:624.50px;font-size:12px;color:#1a1a1a;font-family:'Liberation Mono', monospace;transform:scaleX(0.8905);transform-origin:0 0;-webkit-text-stroke:0.25px #1a1a1a">1710/FTSCY/WS950314480000.00pelunasan lunchbox pempekpakcikDINI DWI WULANDARY</div>
<div class="t" style="left:431.70000000000005px;width:400px;text-align:right;top:623.30px;font-size:11.7px;color:#1a1a1a;font-family:'Liberation Sans', sans-serif;-webkit-text-stroke:0.1px #1a1a1a">4.480.000,00</div>
<div class="t" style="left:696.3px;width:400px;text-align:right;top:623.98px;font-size:11.6px;color:#1a1a1a;font-family:'Liberation Sans', sans-serif;letter-spacing:0.1px;-webkit-text-stroke:0.1px #1a1a1a">582.053.811</div>
<div class="t" style="left:1042.2px;width:200px;text-align:center;top:623.11px;font-size:13px;color:#1a1a1a;font-family:'Liberation Serif', serif;letter-spacing:-0.35px;-webkit-text-stroke:0.2px #1a1a1a">1000.03</div>
<div class="t" style="left:1132.2px;width:200px;text-align:center;top:623.11px;font-size:13px;color:#1a1a1a;font-family:'Liberation Serif', serif;letter-spacing:-0.35px;-webkit-text-stroke:0.2px #1a1a1a">4000.01</div>
<div class="t" style="left:1282.0px;top:622.49px;font-size:13.5px;color:#1a1a1a;font-family:'Liberation Serif', serif;transform:scaleX(0.972);transform-origin:0 0;-webkit-text-stroke:0.2px #1a1a1a">Pempek pakcik Dini Dwi Laundry - Penjualan</div>
<div class="t" style="left:1568.8px;top:622.49px;font-size:13.5px;color:#1a1a1a;font-family:'Liberation Serif', serif;transform:scaleX(0.972);transform-origin:0 0;-webkit-text-stroke:0.2px #1a1a1a">Pempek pakcik Dini Dwi Laundry</div>
<div class="t" style="left:1755.3px;top:622.49px;font-size:13.5px;color:#1a1a1a;font-family:'Liberation Serif', serif;transform:scaleX(0.972);transform-origin:0 0;-webkit-text-stroke:0.2px #1a1a1a">Penjualan</div>
<div class="t" style="left:-370.4px;width:400px;text-align:right;top:641.04px;font-size:12px;color:#2626a6;font-family:'Liberation Sans', sans-serif;letter-spacing:-0.05px">1603</div>
<div class="t" style="left:35.2px;top:641.50px;font-size:12px;color:#1a1a1a;font-family:'Liberation Mono', monospace;transform:scaleX(0.95);transform-origin:0 0;-webkit-text-stroke:0.25px #1a1a1a">17/10/2025</div>
<div class="t" style="left:123.4px;top:641.50px;font-size:12px;color:#1a1a1a;font-family:'Liberation Mono', monospace;transform:scaleX(0.8806);transform-origin:0 0;-webkit-text-stroke:0.25px #1a1a1a">1710/FTSCY/WS9503187000.00robak box kcl 100, box bsr 50MOCH NUROKHMAN</div>
<div class="t" style="left:431.70000000000005px;width:400px;text-align:right;top:640.30px;font-size:11.7px;color:#1a1a1a;font-family:'Liberation Sans', sans-serif;-webkit-text-stroke:0.1px #1a1a1a">87.000,00</div>
<div class="t" style="left:696.3px;width:400px;text-align:right;top:640.98px;font-size:11.6px;color:#1a1a1a;font-family:'Liberation Sans', sans-serif;letter-spacing:0.1px;-webkit-text-stroke:0.1px #1a1a1a">582.140.811</div>
<div class="t" style="left:1042.2px;width:200px;text-align:center;top:640.11px;font-size:13px;color:#1a1a1a;font-family:'Liberation Serif', serif;letter-spacing:-0.35px;-webkit-text-stroke:0.2px #1a1a1a">1000.03</div>
<div class="t" style="left:1132.2px;width:200px;text-align:center;top:640.11px;font-size:13px;color:#1a1a1a;font-family:'Liberation Serif', serif;letter-spacing:-0.35px;-webkit-text-stroke:0.2px #1a1a1a">4000.01</div>
<div class="t" style="left:1282.0px;top:639.49px;font-size:13.5px;color:#1a1a1a;font-family:'Liberation Serif', serif;transform:scaleX(0.972);transform-origin:0 0;-webkit-text-stroke:0.2px #1a1a1a">Moch Nurochman - Penjualan</div>
<div class="t" style="left:1568.8px;top:639.49px;font-size:13.5px;color:#1a1a1a;font-family:'Liberation Serif', serif;transform:scaleX(0.972);transform-origin:0 0;-webkit-text-stroke:0.2px #1a1a1a">Moch Nurochman</div>
<div class="t" style="left:1755.3px;top:639.49px;font-size:13.5px;color:#1a1a1a;font-family:'Liberation Serif', serif;transform:scaleX(0.972);transform-origin:0 0;-webkit-text-stroke:0.2px #1a1a1a">Penjualan</div>
<div class="t" style="left:-370.4px;width:400px;text-align:right;top:658.04px;font-size:12px;color:#2626a6;font-family:'Liberation Sans', sans-serif;letter-spacing:-0.05px">1606</div>
<div class="t" style="left:35.2px;top:658.50px;font-size:12px;color:#1a1a1a;font-family:'Liberation Mono', monospace;transform:scaleX(0.95);transform-origin:0 0;-webkit-text-stroke:0.25px #1a1a1a">17/10/2025</div>
<div class="t" style="left:123.4px;top:658.50px;font-size:12px;color:#1a1a1a;font-family:'Liberation Mono', monospace;transform:scaleX(0.8549);transform-origin:0 0;-webkit-text-stroke:0.25px #1a1a1a">BIF TRANSFER DR 009LUTHFIATHUL FITRI</div>
<div class="t" style="left:431.70000000000005px;width:400px;text-align:right;top:657.30px;font-size:11.7px;color:#1a1a1a;font-family:'Liberation Sans', sans-serif;-webkit-text-stroke:0.1px #1a1a1a">2.982.200,00</div>
<div class="t" style="left:696.3px;width:400px;text-align:right;top:657.98px;font-size:11.6px;color:#1a1a1a;font-family:'Liberation Sans', sans-serif;letter-spacing:0.1px;-webkit-text-stroke:0.1px #1a1a1a">578.505.611</div>
<div class="t" style="left:1042.2px;width:200px;text-align:center;top:657.11px;font-size:13px;color:#1a1a1a;font-family:'Liberation Serif', serif;letter-spacing:-0.35px;-webkit-text-stroke:0.2px #1a1a1a">1000.03</div>
<div class="t" style="left:1132.2px;width:200px;text-align:center;top:657.11px;font-size:13px;color:#1a1a1a;font-family:'Liberation Serif', serif;letter-spacing:-0.35px;-webkit-text-stroke:0.2px #1a1a1a">4000.01</div>
<div class="t" style="left:1282.0px;top:656.49px;font-size:13.5px;color:#1a1a1a;font-family:'Liberation Serif', serif;transform:scaleX(0.972);transform-origin:0 0;-webkit-text-stroke:0.2px #1a1a1a">Luthfiatul Fitri - Penjualan</div>
<div class="t" style="left:1568.8px;top:656.49px;font-size:13.5px;color:#1a1a1a;font-family:'Liberation Serif', serif;transform:scaleX(0.972);transform-origin:0 0;-webkit-text-stroke:0.2px #1a1a1a">Luthfiatul Fitri</div>
<div class="t" style="left:1755.3px;top:656.49px;font-size:13.5px;color:#1a1a1a;font-family:'Liberation Serif', serif;transform:scaleX(0.972);transform-origin:0 0;-webkit-text-stroke:0.2px #1a1a1a">Penjualan</div>
<div class="t" style="left:-370.4px;width:400px;text-align:right;top:675.04px;font-size:12px;color:#2626a6;font-family:'Liberation Sans', sans-serif;letter-spacing:-0.05px">1634</div>
<div class="t" style="left:35.2px;top:675.50px;font-size:12px;color:#1a1a1a;font-family:'Liberation Mono', monospace;transform:scaleX(0.95);transform-origin:0 0;-webkit-text-stroke:0.25px #1a1a1a">18/10/2025</div>
<div class="t" style="left:123.4px;top:675.50px;font-size:12px;color:#1a1a1a;font-family:'Liberation Mono', monospace;transform:scaleX(0.8415);transform-origin:0 0;-webkit-text-stroke:0.25px #1a1a1a">1810/FTSCY/WS950311420500.00sisa bayar box Ami ca Amico SUIDIJANA</div>
<div class="t" style="left:431.70000000000005px;width:400px;text-align:right;top:674.30px;font-size:11.7px;color:#1a1a1a;font-family:'Liberation Sans', sans-serif;-webkit-text-stroke:0.1px #1a1a1a">1.420.500,00</div>
<div class="t" style="left:696.3px;width:400px;text-align:right;top:674.98px;font-size:11.6px;color:#1a1a1a;font-family:'Liberation Sans', sans-serif;letter-spacing:0.1px;-webkit-text-stroke:0.1px #1a1a1a">533.458.655</div>
<div class="t" style="left:1042.2px;width:200px;text-align:center;top:674.11px;font-size:13px;color:#1a1a1a;font-family:'Liberation Serif', serif;letter-spacing:-0.35px;-webkit-text-stroke:0.2px #1a1a1a">1000.03</div>
<div class="t" style="left:1132.2px;width:200px;text-align:center;top:674.11px;font-size:13px;color:#1a1a1a;font-family:'Liberation Serif', serif;letter-spacing:-0.35px;-webkit-text-stroke:0.2px #1a1a1a">4000.01</div>
<div class="t" style="left:1282.0px;top:673.49px;font-size:13.5px;color:#1a1a1a;font-family:'Liberation Serif', serif;transform:scaleX(0.972);transform-origin:0 0;-webkit-text-stroke:0.2px #1a1a1a">KBB - Penjualan</div>
<div class="t" style="left:1568.8px;top:673.49px;font-size:13.5px;color:#1a1a1a;font-family:'Liberation Serif', serif;transform:scaleX(0.972);transform-origin:0 0;-webkit-text-stroke:0.2px #1a1a1a">KBB</div>
<div class="t" style="left:1755.3px;top:673.49px;font-size:13.5px;color:#1a1a1a;font-family:'Liberation Serif', serif;transform:scaleX(0.972);transform-origin:0 0;-webkit-text-stroke:0.2px #1a1a1a">Penjualan</div>
<div class="t" style="left:-370.4px;width:400px;text-align:right;top:692.04px;font-size:12px;color:#2626a6;font-family:'Liberation Sans', sans-serif;letter-spacing:-0.05px">1635</div>
<div class="t" style="left:35.2px;top:692.50px;font-size:12px;color:#1a1a1a;font-family:'Liberation Mono', monospace;transform:scaleX(0.95);transform-origin:0 0;-webkit-text-stroke:0.25px #1a1a1a">19/10/2025</div>
<div class="t" style="left:123.4px;top:692.50px;font-size:12px;color:#1a1a1a;font-family:'Liberation Mono', monospace;transform:scaleX(0.9336);transform-origin:0 0;-webkit-text-stroke:0.25px #1a1a1a">1910/FTSCY/WS95031230000.00AANG NUGRAHINI</div>
<div class="t" style="left:431.70000000000005px;width:400px;text-align:right;top:691.30px;font-size:11.7px;color:#1a1a1a;font-family:'Liberation Sans', sans-serif;-webkit-text-stroke:0.1px #1a1a1a">230.000,00</div>
<div class="t" style="left:696.3px;width:400px;text-align:right;top:691.98px;font-size:11.6px;color:#1a1a1a;font-family:'Liberation Sans', sans-serif;letter-spacing:0.1px;-webkit-text-stroke:0.1px #1a1a1a">533.688.655</div>
<div class="t" style="left:1042.2px;width:200px;text-align:center;top:691.11px;font-size:13px;color:#1a1a1a;font-family:'Liberation Serif', serif;letter-spacing:-0.35px;-webkit-text-stroke:0.2px #1a1a1a">1000.03</div>
<div class="t" style="left:1132.2px;width:200px;text-align:center;top:691.11px;font-size:13px;color:#1a1a1a;font-family:'Liberation Serif', serif;letter-spacing:-0.35px;-webkit-text-stroke:0.2px #1a1a1a">4000.01</div>
<div class="t" style="left:1282.0px;top:690.49px;font-size:13.5px;color:#1a1a1a;font-family:'Liberation Serif', serif;transform:scaleX(0.972);transform-origin:0 0;-webkit-text-stroke:0.2px #1a1a1a">Aang Nugrahini - Penjualan</div>
<div class="t" style="left:1568.8px;top:690.49px;font-size:13.5px;color:#1a1a1a;font-family:'Liberation Serif', serif;transform:scaleX(0.972);transform-origin:0 0;-webkit-text-stroke:0.2px #1a1a1a">Aang Nugrahini</div>
<div class="t" style="left:1755.3px;top:690.49px;font-size:13.5px;color:#1a1a1a;font-family:'Liberation Serif', serif;transform:scaleX(0.972);transform-origin:0 0;-webkit-text-stroke:0.2px #1a1a1a">Penjualan</div>
<div class="t" style="left:-370.4px;width:400px;text-align:right;top:709.04px;font-size:12px;color:#2626a6;font-family:'Liberation Sans', sans-serif;letter-spacing:-0.05px">1636</div>
<div class="t" style="left:35.2px;top:709.50px;font-size:12px;color:#1a1a1a;font-family:'Liberation Mono', monospace;transform:scaleX(0.95);transform-origin:0 0;-webkit-text-stroke:0.25px #1a1a1a">19/10/2025</div>
<div class="t" style="left:123.4px;top:709.50px;font-size:12px;color:#1a1a1a;font-family:'Liberation Mono', monospace;transform:scaleX(0.9126);transform-origin:0 0;-webkit-text-stroke:0.25px #1a1a1a">1910/FTSCY/WS95031880000.00lunasAHMAD FAIZAL</div>
<div class="t" style="left:431.70000000000005px;width:400px;text-align:right;top:708.30px;font-size:11.7px;color:#1a1a1a;font-family:'Liberation Sans', sans-serif;-webkit-text-stroke:0.1px #1a1a1a">880.000,00</div>
<div class="t" style="left:696.3px;width:400px;text-align:right;top:708.98px;font-size:11.6px;color:#1a1a1a;font-family:'Liberation Sans', sans-serif;letter-spacing:0.1px;-webkit-text-stroke:0.1px #1a1a1a">534.568.655</div>
<div class="t" style="left:1042.2px;width:200px;text-align:center;top:708.11px;font-size:13px;color:#1a1a1a;font-family:'Liberation Serif', serif;letter-spacing:-0.35px;-webkit-text-stroke:0.2px #1a1a1a">1000.03</div>
<div class="t" style="left:1132.2px;width:200px;text-align:center;top:708.11px;font-size:13px;color:#1a1a1a;font-family:'Liberation Serif', serif;letter-spacing:-0.35px;-webkit-text-stroke:0.2px #1a1a1a">4000.01</div>
<div class="t" style="left:1282.0px;top:707.49px;font-size:13.5px;color:#1a1a1a;font-family:'Liberation Serif', serif;transform:scaleX(0.972);transform-origin:0 0;-webkit-text-stroke:0.2px #1a1a1a">Ahmad Faizal - Penjualan</div>
<div class="t" style="left:1568.8px;top:707.49px;font-size:13.5px;color:#1a1a1a;font-family:'Liberation Serif', serif;transform:scaleX(0.972);transform-origin:0 0;-webkit-text-stroke:0.2px #1a1a1a">Ahmad Faizal</div>
<div class="t" style="left:1755.3px;top:707.49px;font-size:13.5px;color:#1a1a1a;font-family:'Liberation Serif', serif;transform:scaleX(0.972);transform-origin:0 0;-webkit-text-stroke:0.2px #1a1a1a">Penjualan</div>
<div class="t" style="left:-370.4px;width:400px;text-align:right;top:726.04px;font-size:12px;color:#2626a6;font-family:'Liberation Sans', sans-serif;letter-spacing:-0.05px">1638</div>
<div class="t" style="left:35.2px;top:726.50px;font-size:12px;color:#1a1a1a;font-family:'Liberation Mono', monospace;transform:scaleX(0.95);transform-origin:0 0;-webkit-text-stroke:0.25px #1a1a1a">20/10/2025</div>
<div class="t" style="left:123.4px;top:726.50px;font-size:12px;color:#1a1a1a;font-family:'Liberation Mono', monospace;transform:scaleX(0.9357);transform-origin:0 0;-webkit-text-stroke:0.25px #1a1a1a">2010/FTSCY/WS952711696500.00ANITA SUKMAWATI</div>
<div class="t" style="left:431.70000000000005px;width:400px;text-align:right;top:725.30px;font-size:11.7px;color:#1a1a1a;font-family:'Liberation Sans', sans-serif;-webkit-text-stroke:0.1px #1a1a1a">1.696.500,00</div>
<div class="t" style="left:696.3px;width:400px;text-align:right;top:725.98px;font-size:11.6px;color:#1a1a1a;font-family:'Liberation Sans', sans-serif;letter-spacing:0.1px;-webkit-text-stroke:0.1px #1a1a1a">534.265.155</div>
<div class="t" style="left:1042.2px;width:200px;text-align:center;top:725.11px;font-size:13px;color:#1a1a1a;font-family:'Liberation Serif', serif;letter-spacing:-0.35px;-webkit-text-stroke:0.2px #1a1a1a">1000.03</div>
<div class="t" style="left:1132.2px;width:200px;text-align:center;top:725.11px;font-size:13px;color:#1a1a1a;font-family:'Liberation Serif', serif;letter-spacing:-0.35px;-webkit-text-stroke:0.2px #1a1a1a">4000.01</div>
<div class="t" style="left:1282.0px;top:724.49px;font-size:13.5px;color:#1a1a1a;font-family:'Liberation Serif', serif;transform:scaleX(0.972);transform-origin:0 0;-webkit-text-stroke:0.2px #1a1a1a">Anita Sukmawati - Penjualan</div>
<div class="t" style="left:1568.8px;top:724.49px;font-size:13.5px;color:#1a1a1a;font-family:'Liberation Serif', serif;transform:scaleX(0.972);transform-origin:0 0;-webkit-text-stroke:0.2px #1a1a1a">Anita Sukmawati</div>
<div class="t" style="left:1755.3px;top:724.49px;font-size:13.5px;color:#1a1a1a;font-family:'Liberation Serif', serif;transform:scaleX(0.972);transform-origin:0 0;-webkit-text-stroke:0.2px #1a1a1a">Penjualan</div>
<div class="t" style="left:-370.4px;width:400px;text-align:right;top:743.04px;font-size:12px;color:#2626a6;font-family:'Liberation Sans', sans-serif;letter-spacing:-0.05px">1644</div>
<div class="t" style="left:35.2px;top:743.50px;font-size:12px;color:#1a1a1a;font-family:'Liberation Mono', monospace;transform:scaleX(0.95);transform-origin:0 0;-webkit-text-stroke:0.25px #1a1a1a">21/10/2025</div>
<div class="t" style="left:123.4px;top:743.50px;font-size:12px;color:#1a1a1a;font-family:'Liberation Mono', monospace;transform:scaleX(0.8647);transform-origin:0 0;-webkit-text-stroke:0.25px #1a1a1a">BIF TRANSFER DR 022DENI</div>
<div class="t" style="left:431.70000000000005px;width:400px;text-align:right;top:742.30px;font-size:11.7px;color:#1a1a1a;font-family:'Liberation Sans', sans-serif;-webkit-text-stroke:0.1px #1a1a1a">100.000,00</div>
<div class="t" style="left:696.3px;width:400px;text-align:right;top:742.98px;font-size:11.6px;color:#1a1a1a;font-family:'Liberation Sans', sans-serif;letter-spacing:0.1px;-webkit-text-stroke:0.1px #1a1a1a">504.921.923</div>
<div class="t" style="left:1042.2px;width:200px;text-align:center;top:742.11px;font-size:13px;color:#1a1a1a;font-family:'Liberation Serif', serif;letter-spacing:-0.35px;-webkit-text-stroke:0.2px #1a1a1a">1000.03</div>
<div class="t" style="left:1132.2px;width:200px;text-align:center;top:742.11px;font-size:13px;color:#1a1a1a;font-family:'Liberation Serif', serif;letter-spacing:-0.35px;-webkit-text-stroke:0.2px #1a1a1a">4000.01</div>
<div class="t" style="left:1282.0px;top:741.49px;font-size:13.5px;color:#1a1a1a;font-family:'Liberation Serif', serif;transform:scaleX(0.972);transform-origin:0 0;-webkit-text-stroke:0.2px #1a1a1a">Deni - Penjualan</div>
<div class="t" style="left:1568.8px;top:741.49px;font-size:13.5px;color:#1a1a1a;font-family:'Liberation Serif', serif;transform:scaleX(0.972);transform-origin:0 0;-webkit-text-stroke:0.2px #1a1a1a">Deni</div>
<div class="t" style="left:1755.3px;top:741.49px;font-size:13.5px;color:#1a1a1a;font-family:'Liberation Serif', serif;transform:scaleX(0.972);transform-origin:0 0;-webkit-text-stroke:0.2px #1a1a1a">Penjualan</div>
<div class="t" style="left:-370.4px;width:400px;text-align:right;top:760.04px;font-size:12px;color:#2626a6;font-family:'Liberation Sans', sans-serif;letter-spacing:-0.05px">1645</div>
<div class="t" style="left:35.2px;top:760.50px;font-size:12px;color:#1a1a1a;font-family:'Liberation Mono', monospace;transform:scaleX(0.95);transform-origin:0 0;-webkit-text-stroke:0.25px #1a1a1a">21/10/2025</div>
<div class="t" style="left:123.4px;top:760.50px;font-size:12px;color:#1a1a1a;font-family:'Liberation Mono', monospace;transform:scaleX(0.9144);transform-origin:0 0;-webkit-text-stroke:0.25px #1a1a1a">DR 013IVAN BYSTROV/pmobx</div>
<div class="t" style="left:431.70000000000005px;width:400px;text-align:right;top:759.30px;font-size:11.7px;color:#1a1a1a;font-family:'Liberation Sans', sans-serif;-webkit-text-stroke:0.1px #1a1a1a">1.200.000,00</div>
<div class="t" style="left:696.3px;width:400px;text-align:right;top:759.98px;font-size:11.6px;color:#1a1a1a;font-family:'Liberation Sans', sans-serif;letter-spacing:0.1px;-webkit-text-stroke:0.1px #1a1a1a">506.121.923</div>
<div class="t" style="left:1042.2px;width:200px;text-align:center;top:759.11px;font-size:13px;color:#1a1a1a;font-family:'Liberation Serif', serif;letter-spacing:-0.35px;-webkit-text-stroke:0.2px #1a1a1a">1000.03</div>
<div class="t" style="left:1132.2px;width:200px;text-align:center;top:759.11px;font-size:13px;color:#1a1a1a;font-family:'Liberation Serif', serif;letter-spacing:-0.35px;-webkit-text-stroke:0.2px #1a1a1a">4000.01</div>
<div class="t" style="left:1282.0px;top:758.49px;font-size:13.5px;color:#1a1a1a;font-family:'Liberation Serif', serif;transform:scaleX(0.972);transform-origin:0 0;-webkit-text-stroke:0.2px #1a1a1a">Penjualan - Penjualan</div>
<div class="t" style="left:1568.8px;top:758.49px;font-size:13.5px;color:#1a1a1a;font-family:'Liberation Serif', serif;transform:scaleX(0.972);transform-origin:0 0;-webkit-text-stroke:0.2px #1a1a1a">Penjualan</div>
<div class="t" style="left:1755.3px;top:758.49px;font-size:13.5px;color:#1a1a1a;font-family:'Liberation Serif', serif;transform:scaleX(0.972);transform-origin:0 0;-webkit-text-stroke:0.2px #1a1a1a">Penjualan</div>
<div class="t" style="left:-370.4px;width:400px;text-align:right;top:777.04px;font-size:12px;color:#2626a6;font-family:'Liberation Sans', sans-serif;letter-spacing:-0.05px">1649</div>
<div class="t" style="left:35.2px;top:777.50px;font-size:12px;color:#1a1a1a;font-family:'Liberation Mono', monospace;transform:scaleX(0.95);transform-origin:0 0;-webkit-text-stroke:0.25px #1a1a1a">22/10/2025</div>
<div class="t" style="left:123.4px;top:777.50px;font-size:12px;color:#1a1a1a;font-family:'Liberation Mono', monospace;transform:scaleX(0.9067);transform-origin:0 0;-webkit-text-stroke:0.25px #1a1a1a">2210/FTSCY/WS950311174500.00inv 100AGUNG PRIYANDANA I</div>
<div class="t" style="left:431.70000000000005px;width:400px;text-align:right;top:776.30px;font-size:11.7px;color:#1a1a1a;font-family:'Liberation Sans', sans-serif;-webkit-text-stroke:0.1px #1a1a1a">1.174.500,00</div>
<div class="t" style="left:696.3px;width:400px;text-align:right;top:776.98px;font-size:11.6px;color:#1a1a1a;font-family:'Liberation Sans', sans-serif;letter-spacing:0.1px;-webkit-text-stroke:0.1px #1a1a1a">504.811.423</div>
<div class="t" style="left:1042.2px;width:200px;text-align:center;top:776.11px;font-size:13px;color:#1a1a1a;font-family:'Liberation Serif', serif;letter-spacing:-0.35px;-webkit-text-stroke:0.2px #1a1a1a">1000.03</div>
<div class="t" style="left:1132.2px;width:200px;text-align:center;top:776.11px;font-size:13px;color:#1a1a1a;font-family:'Liberation Serif', serif;letter-spacing:-0.35px;-webkit-text-stroke:0.2px #1a1a1a">4000.01</div>
<div class="t" style="left:1282.0px;top:775.49px;font-size:13.5px;color:#1a1a1a;font-family:'Liberation Serif', serif;transform:scaleX(0.972);transform-origin:0 0;-webkit-text-stroke:0.2px #1a1a1a">Agung Priyandana - Penjualan</div>
<div class="t" style="left:1568.8px;top:775.49px;font-size:13.5px;color:#1a1a1a;font-family:'Liberation Serif', serif;transform:scaleX(0.972);transform-origin:0 0;-webkit-text-stroke:0.2px #1a1a1a">Agung Priyandana</div>
<div class="t" style="left:1755.3px;top:775.49px;font-size:13.5px;color:#1a1a1a;font-family:'Liberation Serif', serif;transform:scaleX(0.972);transform-origin:0 0;-webkit-text-stroke:0.2px #1a1a1a">Penjualan</div>
<div class="t" style="left:-370.4px;width:400px;text-align:right;top:794.04px;font-size:12px;color:#2626a6;font-family:'Liberation Sans', sans-serif;letter-spacing:-0.05px">1653</div>
<div class="t" style="left:35.2px;top:794.50px;font-size:12px;color:#1a1a1a;font-family:'Liberation Mono', monospace;transform:scaleX(0.95);transform-origin:0 0;-webkit-text-stroke:0.25px #1a1a1a">22/10/2025</div>
<div class="t" style="left:123.4px;top:794.50px;font-size:12px;color:#1a1a1a;font-family:'Liberation Mono', monospace;transform:scaleX(0.8938);transform-origin:0 0;-webkit-text-stroke:0.25px #1a1a1a">BIF TRANSFER DR 535DIYAH AYU RAHMAWAT</div>
<div class="t" style="left:431.70000000000005px;width:400px;text-align:right;top:793.30px;font-size:11.7px;color:#1a1a1a;font-family:'Liberation Sans', sans-serif;-webkit-text-stroke:0.1px #1a1a1a">1.095.400,00</div>
<div class="t" style="left:696.3px;width:400px;text-align:right;top:793.98px;font-size:11.6px;color:#1a1a1a;font-family:'Liberation Sans', sans-serif;letter-spacing:0.1px;-webkit-text-stroke:0.1px #1a1a1a">486.483.923</div>
<div class="t" style="left:1042.2px;width:200px;text-align:center;top:793.11px;font-size:13px;color:#1a1a1a;font-family:'Liberation Serif', serif;letter-spacing:-0.35px;-webkit-text-stroke:0.2px #1a1a1a">1000.03</div>
<div class="t" style="left:1132.2px;width:200px;text-align:center;top:793.11px;font-size:13px;color:#1a1a1a;font-family:'Liberation Serif', serif;letter-spacing:-0.35px;-webkit-text-stroke:0.2px #1a1a1a">4000.01</div>
<div class="t" style="left:1282.0px;top:792.49px;font-size:13.5px;color:#1a1a1a;font-family:'Liberation Serif', serif;transform:scaleX(0.972);transform-origin:0 0;-webkit-text-stroke:0.2px #1a1a1a">Diyah Ayu - Penjualan</div>
<div class="t" style="left:1568.8px;top:792.49px;font-size:13.5px;color:#1a1a1a;font-family:'Liberation Serif', serif;transform:scaleX(0.972);transform-origin:0 0;-webkit-text-stroke:0.2px #1a1a1a">Diyah Ayu</div>
<div class="t" style="left:1755.3px;top:792.49px;font-size:13.5px;color:#1a1a1a;font-family:'Liberation Serif', serif;transform:scaleX(0.972);transform-origin:0 0;-webkit-text-stroke:0.2px #1a1a1a">Penjualan</div>
<div class="t" style="left:-370.4px;width:400px;text-align:right;top:811.04px;font-size:12px;color:#2626a6;font-family:'Liberation Sans', sans-serif;letter-spacing:-0.05px">1654</div>
<div class="t" style="left:35.2px;top:811.50px;font-size:12px;color:#1a1a1a;font-family:'Liberation Mono', monospace;transform:scaleX(0.95);transform-origin:0 0;-webkit-text-stroke:0.25px #1a1a1a">23/10/2025</div>
<div class="t" style="left:123.4px;top:811.50px;font-size:12px;color:#1a1a1a;font-family:'Liberation Mono', monospace;transform:scaleX(0.8615);transform-origin:0 0;-webkit-text-stroke:0.25px #1a1a1a">2310/FTSCY/WS95031825000.00cetak chiclin 3000 pcsCENNY FIRNANELLA</div>
<div class="t" style="left:431.70000000000005px;width:400px;text-align:right;top:810.30px;font-size:11.7px;color:#1a1a1a;font-family:'Liberation Sans', sans-serif;-webkit-text-stroke:0.1px #1a1a1a">825.000,00</div>
<div class="t" style="left:696.3px;width:400px;text-align:right;top:810.98px;font-size:11.6px;color:#1a1a1a;font-family:'Liberation Sans', sans-serif;letter-spacing:0.1px;-webkit-text-stroke:0.1px #1a1a1a">487.308.923</div>
<div class="t" style="left:1042.2px;width:200px;text-align:center;top:810.11px;font-size:13px;color:#1a1a1a;font-family:'Liberation Serif', serif;letter-spacing:-0.35px;-webkit-text-stroke:0.2px #1a1a1a">1000.03</div>
<div class="t" style="left:1132.2px;width:200px;text-align:center;top:810.11px;font-size:13px;color:#1a1a1a;font-family:'Liberation Serif', serif;letter-spacing:-0.35px;-webkit-text-stroke:0.2px #1a1a1a">4000.01</div>
<div class="t" style="left:1282.0px;top:809.49px;font-size:13.5px;color:#1a1a1a;font-family:'Liberation Serif', serif;transform:scaleX(0.972);transform-origin:0 0;-webkit-text-stroke:0.2px #1a1a1a">Cenny Firnanella - Penjualan</div>
<div class="t" style="left:1568.8px;top:809.49px;font-size:13.5px;color:#1a1a1a;font-family:'Liberation Serif', serif;transform:scaleX(0.972);transform-origin:0 0;-webkit-text-stroke:0.2px #1a1a1a">Cenny Firnanella</div>
<div class="t" style="left:1755.3px;top:809.49px;font-size:13.5px;color:#1a1a1a;font-family:'Liberation Serif', serif;transform:scaleX(0.972);transform-origin:0 0;-webkit-text-stroke:0.2px #1a1a1a">Penjualan</div>
<div class="t" style="left:-370.4px;width:400px;text-align:right;top:828.04px;font-size:12px;color:#2626a6;font-family:'Liberation Sans', sans-serif;letter-spacing:-0.05px">1655</div>
<div class="t" style="left:35.2px;top:828.50px;font-size:12px;color:#1a1a1a;font-family:'Liberation Mono', monospace;transform:scaleX(0.95);transform-origin:0 0;-webkit-text-stroke:0.25px #1a1a1a">25/10</div>
<div class="t" style="left:123.4px;top:828.50px;font-size:12px;color:#1a1a1a;font-family:'Liberation Mono', monospace;transform:scaleX(0.9576);transform-origin:0 0;-webkit-text-stroke:0.25px #1a1a1a">2510/FTSCY/WS95051700000.00KHOERUNNISA</div>
<div class="t" style="left:589.5px;width:400px;text-align:right;top:827.30px;font-size:11.7px;color:#1a1a1a;font-family:'Liberation Sans', sans-serif;-webkit-text-stroke:0.1px #1a1a1a">700.000,00</div>
<div class="t" style="left:696.3px;width:400px;text-align:right;top:827.98px;font-size:11.6px;color:#1a1a1a;font-family:'Liberation Sans', sans-serif;letter-spacing:0.1px;-webkit-text-stroke:0.1px #1a1a1a">486.608.923</div>
<div class="t" style="left:1042.2px;width:200px;text-align:center;top:827.11px;font-size:13px;color:#1a1a1a;font-family:'Liberation Serif', serif;letter-spacing:-0.35px;-webkit-text-stroke:0.2px #1a1a1a">1000.03</div>
<div class="t" style="left:1132.2px;width:200px;text-align:center;top:827.11px;font-size:13px;color:#1a1a1a;font-family:'Liberation Serif', serif;letter-spacing:-0.35px;-webkit-text-stroke:0.2px #1a1a1a">5000.01</div>
<div class="t" style="left:1282.0px;top:826.49px;font-size:13.5px;color:#1a1a1a;font-family:'Liberation Serif', serif;transform:scaleX(0.972);transform-origin:0 0;-webkit-text-stroke:0.2px #1a1a1a">Khoerunnisa - Pembelian</div>
<div class="t" style="left:1568.8px;top:826.49px;font-size:13.5px;color:#1a1a1a;font-family:'Liberation Serif', serif;transform:scaleX(0.972);transform-origin:0 0;-webkit-text-stroke:0.2px #1a1a1a">Khoerunnisa</div>
<div class="t" style="left:1755.3px;top:826.49px;font-size:13.5px;color:#1a1a1a;font-family:'Liberation Serif', serif;transform:scaleX(0.972);transform-origin:0 0;-webkit-text-stroke:0.2px #1a1a1a">Pembelian</div>
<div class="t" style="left:-370.4px;width:400px;text-align:right;top:845.04px;font-size:12px;color:#2626a6;font-family:'Liberation Sans', sans-serif;letter-spacing:-0.05px">1674</div>
<div class="t" style="left:35.2px;top:845.50px;font-size:12px;color:#1a1a1a;font-family:'Liberation Mono', monospace;transform:scaleX(0.95);transform-origin:0 0;-webkit-text-stroke:0.25px #1a1a1a">25/10/2025</div>
<div class="t" style="left:123.4px;top:845.50px;font-size:12px;color:#1a1a1a;font-family:'Liberation Mono', monospace;transform:scaleX(0.8544);transform-origin:0 0;-webkit-text-stroke:0.25px #1a1a1a">BIF TRANSFER DR 002NELI NOVALIA</div>
<div class="t" style="left:431.70000000000005px;width:400px;text-align:right;top:844.30px;font-size:11.7px;color:#1a1a1a;font-family:'Liberation Sans', sans-serif;-webkit-text-stroke:0.1px #1a1a1a">6.353.500,00</div>
<div class="t" style="left:696.3px;width:400px;text-align:right;top:844.98px;font-size:11.6px;color:#1a1a1a;font-family:'Liberation Sans', sans-serif;letter-spacing:0.1px;-webkit-text-stroke:0.1px #1a1a1a">473.962.443</div>
<div class="t" style="left:1042.2px;width:200px;text-align:center;top:844.11px;font-size:13px;color:#1a1a1a;font-family:'Liberation Serif', serif;letter-spacing:-0.35px;-webkit-text-stroke:0.2px #1a1a1a">1000.03</div>
<div class="t" style="left:1132.2px;width:200px;text-align:center;top:844.11px;font-size:13px;color:#1a1a1a;font-family:'Liberation Serif', serif;letter-spacing:-0.35px;-webkit-text-stroke:0.2px #1a1a1a">4000.01</div>
<div class="t" style="left:1282.0px;top:843.49px;font-size:13.5px;color:#1a1a1a;font-family:'Liberation Serif', serif;transform:scaleX(0.972);transform-origin:0 0;-webkit-text-stroke:0.2px #1a1a1a">Neli Novalia - Penjualan</div>
<div class="t" style="left:1568.8px;top:843.49px;font-size:13.5px;color:#1a1a1a;font-family:'Liberation Serif', serif;transform:scaleX(0.972);transform-origin:0 0;-webkit-text-stroke:0.2px #1a1a1a">Neli Novalia</div>
<div class="t" style="left:1755.3px;top:843.49px;font-size:13.5px;color:#1a1a1a;font-family:'Liberation Serif', serif;transform:scaleX(0.972);transform-origin:0 0;-webkit-text-stroke:0.2px #1a1a1a">Penjualan</div>
<div class="t" style="left:-370.4px;width:400px;text-align:right;top:862.04px;font-size:12px;color:#2626a6;font-family:'Liberation Sans', sans-serif;letter-spacing:-0.05px">1676</div>
<div class="t" style="left:35.2px;top:862.50px;font-size:12px;color:#1a1a1a;font-family:'Liberation Mono', monospace;transform:scaleX(0.95);transform-origin:0 0;-webkit-text-stroke:0.25px #1a1a1a">26/10/2025</div>
<div class="t" style="left:123.4px;top:862.50px;font-size:12px;color:#1a1a1a;font-family:'Liberation Mono', monospace;transform:scaleX(0.9349);transform-origin:0 0;-webkit-text-stroke:0.25px #1a1a1a">NTRF@972815214X0Z6 805@BCA25103237304@DP kardus Kue Balo @AFR</div>
<div class="t" style="left:431.70000000000005px;width:400px;text-align:right;top:861.30px;font-size:11.7px;color:#1a1a1a;font-family:'Liberation Sans', sans-serif;-webkit-text-stroke:0.1px #1a1a1a">775.000,00</div>
<div class="t" style="left:696.3px;width:400px;text-align:right;top:861.98px;font-size:11.6px;color:#1a1a1a;font-family:'Liberation Sans', sans-serif;letter-spacing:0.1px;-webkit-text-stroke:0.1px #1a1a1a">469.237.443</div>
<div class="t" style="left:1042.2px;width:200px;text-align:center;top:861.11px;font-size:13px;color:#1a1a1a;font-family:'Liberation Serif', serif;letter-spacing:-0.35px;-webkit-text-stroke:0.2px #1a1a1a">1000.03</div>
<div class="t" style="left:1132.2px;width:200px;text-align:center;top:861.11px;font-size:13px;color:#1a1a1a;font-family:'Liberation Serif', serif;letter-spacing:-0.35px;-webkit-text-stroke:0.2px #1a1a1a">4000.01</div>
<div class="t" style="left:1282.0px;top:860.49px;font-size:13.5px;color:#1a1a1a;font-family:'Liberation Serif', serif;transform:scaleX(0.972);transform-origin:0 0;-webkit-text-stroke:0.2px #1a1a1a">Kardus Kue - Penjualan</div>
<div class="t" style="left:1568.8px;top:860.49px;font-size:13.5px;color:#1a1a1a;font-family:'Liberation Serif', serif;transform:scaleX(0.972);transform-origin:0 0;-webkit-text-stroke:0.2px #1a1a1a">Kardus Kue</div>
<div class="t" style="left:1755.3px;top:860.49px;font-size:13.5px;color:#1a1a1a;font-family:'Liberation Serif', serif;transform:scaleX(0.972);transform-origin:0 0;-webkit-text-stroke:0.2px #1a1a1a">Penjualan</div>
<div class="t" style="left:-370.4px;width:400px;text-align:right;top:879.04px;font-size:12px;color:#2626a6;font-family:'Liberation Sans', sans-serif;letter-spacing:-0.05px">1677</div>
<div class="t" style="left:35.2px;top:879.50px;font-size:12px;color:#1a1a1a;font-family:'Liberation Mono', monospace;transform:scaleX(0.95);transform-origin:0 0;-webkit-text-stroke:0.25px #1a1a1a">27/10/2025</div>
<div class="t" style="left:123.4px;top:879.50px;font-size:12px;color:#1a1a1a;font-family:'Liberation Mono', monospace;transform:scaleX(0.8735);transform-origin:0 0;-webkit-text-stroke:0.25px #1a1a1a">2710/FTSCY/WS95051635000.00NO 255DP SUSHI HIME HOBI JADI BISNIS P</div>
<div class="t" style="left:431.70000000000005px;width:400px;text-align:right;top:878.30px;font-size:11.7px;color:#1a1a1a;font-family:'Liberation Sans', sans-serif;-webkit-text-stroke:0.1px #1a1a1a">635.000,00</div>
<div class="t" style="left:696.3px;width:400px;text-align:right;top:878.98px;font-size:11.6px;color:#1a1a1a;font-family:'Liberation Sans', sans-serif;letter-spacing:0.1px;-webkit-text-stroke:0.1px #1a1a1a">469.872.443</div>
<div class="t" style="left:1042.2px;width:200px;text-align:center;top:878.11px;font-size:13px;color:#1a1a1a;font-family:'Liberation Serif', serif;letter-spacing:-0.35px;-webkit-text-stroke:0.2px #1a1a1a">1000.03</div>
<div class="t" style="left:1132.2px;width:200px;text-align:center;top:878.11px;font-size:13px;color:#1a1a1a;font-family:'Liberation Serif', serif;letter-spacing:-0.35px;-webkit-text-stroke:0.2px #1a1a1a">4000.01</div>
<div class="t" style="left:1282.0px;top:877.49px;font-size:13.5px;color:#1a1a1a;font-family:'Liberation Serif', serif;transform:scaleX(0.972);transform-origin:0 0;-webkit-text-stroke:0.2px #1a1a1a">Hobi Jadi Bisnis - Penjualan</div>
<div class="t" style="left:1568.8px;top:877.49px;font-size:13.5px;color:#1a1a1a;font-family:'Liberation Serif', serif;transform:scaleX(0.972);transform-origin:0 0;-webkit-text-stroke:0.2px #1a1a1a">Hobi Jadi Bisnis</div>
<div class="t" style="left:1755.3px;top:877.49px;font-size:13.5px;color:#1a1a1a;font-family:'Liberation Serif', serif;transform:scaleX(0.972);transform-origin:0 0;-webkit-text-stroke:0.2px #1a1a1a">Penjualan</div>
<div class="t" style="left:-370.4px;width:400px;text-align:right;top:896.04px;font-size:12px;color:#2626a6;font-family:'Liberation Sans', sans-serif;letter-spacing:-0.05px">1697</div>
<div class="t" style="left:35.2px;top:896.50px;font-size:12px;color:#1a1a1a;font-family:'Liberation Mono', monospace;transform:scaleX(0.95);transform-origin:0 0;-webkit-text-stroke:0.25px #1a1a1a">31/10/2025</div>
<div class="t" style="left:123.4px;top:896.50px;font-size:12px;color:#1a1a1a;font-family:'Liberation Mono', monospace;transform:scaleX(0.9144);transform-origin:0 0;-webkit-text-stroke:0.25px #1a1a1a">DR 013IVAN BYSTROV/pmobx</div>
<div class="t" style="left:431.70000000000005px;width:400px;text-align:right;top:895.30px;font-size:11.7px;color:#1a1a1a;font-family:'Liberation Sans', sans-serif;-webkit-text-stroke:0.1px #1a1a1a">604.000,00</div>
<div class="t" style="left:696.3px;width:400px;text-align:right;top:895.98px;font-size:11.6px;color:#1a1a1a;font-family:'Liberation Sans', sans-serif;letter-spacing:0.1px;-webkit-text-stroke:0.1px #1a1a1a">416.415.797</div>
<div class="t" style="left:1042.2px;width:200px;text-align:center;top:895.11px;font-size:13px;color:#1a1a1a;font-family:'Liberation Serif', serif;letter-spacing:-0.35px;-webkit-text-stroke:0.2px #1a1a1a">1000.03</div>
<div class="t" style="left:1132.2px;width:200px;text-align:center;top:895.11px;font-size:13px;color:#1a1a1a;font-family:'Liberation Serif', serif;letter-spacing:-0.35px;-webkit-text-stroke:0.2px #1a1a1a">4000.01</div>
<div class="t" style="left:1282.0px;top:894.49px;font-size:13.5px;color:#1a1a1a;font-family:'Liberation Serif', serif;transform:scaleX(0.972);transform-origin:0 0;-webkit-text-stroke:0.2px #1a1a1a">Ivan Bystro - Penjualan</div>
<div class="t" style="left:1568.8px;top:894.49px;font-size:13.5px;color:#1a1a1a;font-family:'Liberation Serif', serif;transform:scaleX(0.972);transform-origin:0 0;-webkit-text-stroke:0.2px #1a1a1a">Ivan Bystro</div>
<div class="t" style="left:1755.3px;top:894.49px;font-size:13.5px;color:#1a1a1a;font-family:'Liberation Serif', serif;transform:scaleX(0.972);transform-origin:0 0;-webkit-text-stroke:0.2px #1a1a1a">Penjualan</div>
<div class="t" style="left:-370.4px;width:400px;text-align:right;top:913.04px;font-size:12px;color:#2626a6;font-family:'Liberation Sans', sans-serif;letter-spacing:-0.05px">1711</div>
<div class="t" style="left:35.2px;top:913.50px;font-size:12px;color:#1a1a1a;font-family:'Liberation Mono', monospace;transform:scaleX(0.95);transform-origin:0 0;-webkit-text-stroke:0.25px #1a1a1a">04/11/2025</div>
<div class="t" style="left:123.4px;top:913.50px;font-size:12px;color:#1a1a1a;font-family:'Liberation Mono', monospace;transform:scaleX(0.8845);transform-origin:0 0;-webkit-text-stroke:0.25px #1a1a1a">0411/FTSCY/WS950311000000.00cicilAGUNG PRIYANDANA I</div>
<div class="t" style="left:431.70000000000005px;width:400px;text-align:right;top:912.30px;font-size:11.7px;color:#1a1a1a;font-family:'Liberation Sans', sans-serif;-webkit-text-stroke:0.1px #1a1a1a">1.000.000,00</div>
<div class="t" style="left:696.3px;width:400px;text-align:right;top:912.98px;font-size:11.6px;color:#1a1a1a;font-family:'Liberation Sans', sans-serif;letter-spacing:0.1px;-webkit-text-stroke:0.1px #1a1a1a">413.562.999</div>
<div class="t" style="left:1042.2px;width:200px;text-align:center;top:912.11px;font-size:13px;color:#1a1a1a;font-family:'Liberation Serif', serif;letter-spacing:-0.35px;-webkit-text-stroke:0.2px #1a1a1a">1000.03</div>
<div class="t" style="left:1132.2px;width:200px;text-align:center;top:912.11px;font-size:13px;color:#1a1a1a;font-family:'Liberation Serif', serif;letter-spacing:-0.35px;-webkit-text-stroke:0.2px #1a1a1a">4000.01</div>
<div class="t" style="left:1282.0px;top:911.49px;font-size:13.5px;color:#1a1a1a;font-family:'Liberation Serif', serif;transform:scaleX(0.972);transform-origin:0 0;-webkit-text-stroke:0.2px #1a1a1a">Agung Priyandana - Penjualan</div>
<div class="t" style="left:1568.8px;top:911.49px;font-size:13.5px;color:#1a1a1a;font-family:'Liberation Serif', serif;transform:scaleX(0.972);transform-origin:0 0;-webkit-text-stroke:0.2px #1a1a1a">Agung Priyandana</div>
<div class="t" style="left:1755.3px;top:911.49px;font-size:13.5px;color:#1a1a1a;font-family:'Liberation Serif', serif;transform:scaleX(0.972);transform-origin:0 0;-webkit-text-stroke:0.2px #1a1a1a">Penjualan</div>
<div class="t" style="left:-370.4px;width:400px;text-align:right;top:930.04px;font-size:12px;color:#2626a6;font-family:'Liberation Sans', sans-serif;letter-spacing:-0.05px">1714</div>
<div class="t" style="left:35.2px;top:930.50px;font-size:12px;color:#1a1a1a;font-family:'Liberation Mono', monospace;transform:scaleX(0.95);transform-origin:0 0;-webkit-text-stroke:0.25px #1a1a1a">10/11/2025</div>
<div class="t" style="left:123.4px;top:930.50px;font-size:12px;color:#1a1a1a;font-family:'Liberation Mono', monospace;transform:scaleX(0.8812);transform-origin:0 0;-webkit-text-stroke:0.25px #1a1a1a">1011/FTSCY/WS95051985000.00PELUNASAN PACK INV 261HOBI JADI BISNIS P</div>
<div class="t" style="left:431.70000000000005px;width:400px;text-align:right;top:929.30px;font-size:11.7px;color:#1a1a1a;font-family:'Liberation Sans', sans-serif;-webkit-text-stroke:0.1px #1a1a1a">985.000,00</div>
<div class="t" style="left:696.3px;width:400px;text-align:right;top:929.98px;font-size:11.6px;color:#1a1a1a;font-family:'Liberation Sans', sans-serif;letter-spacing:0.1px;-webkit-text-stroke:0.1px #1a1a1a">412.347.999</div>
<div class="t" style="left:1042.2px;width:200px;text-align:center;top:929.11px;font-size:13px;color:#1a1a1a;font-family:'Liberation Serif', serif;letter-spacing:-0.35px;-webkit-text-stroke:0.2px #1a1a1a">1000.03</div>
<div class="t" style="left:1132.2px;width:200px;text-align:center;top:929.11px;font-size:13px;color:#1a1a1a;font-family:'Liberation Serif', serif;letter-spacing:-0.35px;-webkit-text-stroke:0.2px #1a1a1a">4000.01</div>
<div class="t" style="left:1282.0px;top:928.49px;font-size:13.5px;color:#1a1a1a;font-family:'Liberation Serif', serif;transform:scaleX(0.972);transform-origin:0 0;-webkit-text-stroke:0.2px #1a1a1a">Hobi Jadi Bisnis - Penjualan</div>
<div class="t" style="left:1568.8px;top:928.49px;font-size:13.5px;color:#1a1a1a;font-family:'Liberation Serif', serif;transform:scaleX(0.972);transform-origin:0 0;-webkit-text-stroke:0.2px #1a1a1a">Hobi Jadi Bisnis</div>
<div class="t" style="left:1755.3px;top:928.49px;font-size:13.5px;color:#1a1a1a;font-family:'Liberation Serif', serif;transform:scaleX(0.972);transform-origin:0 0;-webkit-text-stroke:0.2px #1a1a1a">Penjualan</div>
<div class="t" style="left:-370.4px;width:400px;text-align:right;top:947.04px;font-size:12px;color:#2626a6;font-family:'Liberation Sans', sans-serif;letter-spacing:-0.05px">1715</div>
<div class="t" style="left:35.2px;top:947.50px;font-size:12px;color:#1a1a1a;font-family:'Liberation Mono', monospace;transform:scaleX(0.95);transform-origin:0 0;-webkit-text-stroke:0.25px #1a1a1a">10/11/2025</div>
<div class="t" style="left:123.4px;top:947.50px;font-size:12px;color:#1a1a1a;font-family:'Liberation Mono', monospace;transform:scaleX(0.8446);transform-origin:0 0;-webkit-text-stroke:0.25px #1a1a1a">BIF TRANSFER DR 009YESI FAJAR PANGEST</div>
<div class="t" style="left:431.70000000000005px;width:400px;text-align:right;top:946.30px;font-size:11.7px;color:#1a1a1a;font-family:'Liberation Sans', sans-serif;-webkit-text-stroke:0.1px #1a1a1a">2.055.600,00</div>
<div class="t" style="left:696.3px;width:400px;text-align:right;top:946.98px;font-size:11.6px;color:#1a1a1a;font-family:'Liberation Sans', sans-serif;letter-spacing:0.1px;-webkit-text-stroke:0.1px #1a1a1a">414.403.599</div>
<div class="t" style="left:1042.2px;width:200px;text-align:center;top:946.11px;font-size:13px;color:#1a1a1a;font-family:'Liberation Serif', serif;letter-spacing:-0.35px;-webkit-text-stroke:0.2px #1a1a1a">1000.03</div>
<div class="t" style="left:1132.2px;width:200px;text-align:center;top:946.11px;font-size:13px;color:#1a1a1a;font-family:'Liberation Serif', serif;letter-spacing:-0.35px;-webkit-text-stroke:0.2px #1a1a1a">4000.01</div>
<div class="t" style="left:1282.0px;top:945.49px;font-size:13.5px;color:#1a1a1a;font-family:'Liberation Serif', serif;transform:scaleX(0.972);transform-origin:0 0;-webkit-text-stroke:0.2px #1a1a1a">Yesi Fajar Pangestu - Penjualan</div>
<div class="t" style="left:1568.8px;top:945.49px;font-size:13.5px;color:#1a1a1a;font-family:'Liberation Serif', serif;transform:scaleX(0.972);transform-origin:0 0;-webkit-text-stroke:0.2px #1a1a1a">Yesi Fajar Pangestu</div>
<div class="t" style="left:1755.3px;top:945.49px;font-size:13.5px;color:#1a1a1a;font-family:'Liberation Serif', serif;transform:scaleX(0.972);transform-origin:0 0;-webkit-text-stroke:0.2px #1a1a1a">Penjualan</div>
<div class="t" style="left:-370.4px;width:400px;text-align:right;top:964.04px;font-size:12px;color:#2626a6;font-family:'Liberation Sans', sans-serif;letter-spacing:-0.05px">1717</div>
<div class="t" style="left:35.2px;top:964.50px;font-size:12px;color:#1a1a1a;font-family:'Liberation Mono', monospace;transform:scaleX(0.95);transform-origin:0 0;-webkit-text-stroke:0.25px #1a1a1a">22/11/2025</div>
<div class="t" style="left:123.4px;top:964.50px;font-size:12px;color:#1a1a1a;font-family:'Liberation Mono', monospace;transform:scaleX(0.8544);transform-origin:0 0;-webkit-text-stroke:0.25px #1a1a1a">BIF TRANSFER DR 002NELI NOVALIA</div>
<div class="t" style="left:431.70000000000005px;width:400px;text-align:right;top:963.30px;font-size:11.7px;color:#1a1a1a;font-family:'Liberation Sans', sans-serif;-webkit-text-stroke:0.1px #1a1a1a">1.948.000,00</div>
<div class="t" style="left:696.3px;width:400px;text-align:right;top:963.98px;font-size:11.6px;color:#1a1a1a;font-family:'Liberation Sans', sans-serif;letter-spacing:0.1px;-webkit-text-stroke:0.1px #1a1a1a">415.651.599</div>
<div class="t" style="left:1042.2px;width:200px;text-align:center;top:963.11px;font-size:13px;color:#1a1a1a;font-family:'Liberation Serif', serif;letter-spacing:-0.35px;-webkit-text-stroke:0.2px #1a1a1a">1000.03</div>
<div class="t" style="left:1132.2px;width:200px;text-align:center;top:963.11px;font-size:13px;color:#1a1a1a;font-family:'Liberation Serif', serif;letter-spacing:-0.35px;-webkit-text-stroke:0.2px #1a1a1a">4000.01</div>
<div class="t" style="left:1282.0px;top:962.49px;font-size:13.5px;color:#1a1a1a;font-family:'Liberation Serif', serif;transform:scaleX(0.972);transform-origin:0 0;-webkit-text-stroke:0.2px #1a1a1a">Neli Novalia - Penjualan</div>
<div class="t" style="left:1568.8px;top:962.49px;font-size:13.5px;color:#1a1a1a;font-family:'Liberation Serif', serif;transform:scaleX(0.972);transform-origin:0 0;-webkit-text-stroke:0.2px #1a1a1a">Neli Novalia</div>
<div class="t" style="left:1755.3px;top:962.49px;font-size:13.5px;color:#1a1a1a;font-family:'Liberation Serif', serif;transform:scaleX(0.972);transform-origin:0 0;-webkit-text-stroke:0.2px #1a1a1a">Penjualan</div>
<div class="r" style="left:1565px;top:347px;width:190px;height:19px;border:2px solid #1e6b41"></div>
<div class="r" style="left:1750px;top:362px;width:5px;height:5px;background:#1e6b41;border:1px solid #fff"></div>
<div class="r" style="left:1595px;top:350px;width:1px;height:13px;background:#222"></div>
<div class="r" style="left:0px;top:982px;width:1920px;height:28px;background:#e6e6e6"></div>
<div class="r" style="left:0px;top:982px;width:1898px;height:1px;background:#9a9a9a"></div>
<svg style="left:0;top:0" width="1" height="1"><g fill="#bdbdbd"><path d="M31.5 990.5v8l-4-4z"/><path d="M56 990.5v8l4-4z"/></g></svg>
<div class="r" style="left:100px;top:986px;width:1px;height:20px;background:#b0b0b0"></div>
<div class="r" style="left:401.5px;top:986px;width:1px;height:20px;background:#b0b0b0"></div>
<div class="r" style="left:626px;top:986px;width:1px;height:20px;background:#b0b0b0"></div>
<div class="r" style="left:691.5px;top:986px;width:1px;height:20px;background:#b0b0b0"></div>
<div class="r" style="left:854px;top:986px;width:1px;height:20px;background:#b0b0b0"></div>
<div class="r" style="left:140px;top:981px;width:41px;height:25px;background:#ffffff"></div>
<div class="r" style="left:140px;top:1004px;width:41px;height:2px;background:#217346"></div>
<div class="t" style="left:111.5px;top:989.75px;font-size:12.7px;color:#444;font-family:'Liberation Sans', sans-serif;">RK</div>
<div class="t" style="left:151.5px;top:989.75px;font-size:12.7px;color:#1e6b41;font-family:'Liberation Sans', sans-serif;font-weight:bold;">rk</div>
<div class="t" style="left:197px;top:989.75px;font-size:12.7px;color:#444;font-family:'Liberation Sans', sans-serif;letter-spacing:-0.15px">FPK-PT Warna Media Packaging</div>
<div class="t" style="left:418px;top:989.75px;font-size:12.7px;color:#444;font-family:'Liberation Sans', sans-serif;letter-spacing:-0.15px">FPM-PT Warna Media Packaging</div>
<div class="t" style="left:639.3px;top:989.75px;font-size:12.7px;color:#444;font-family:'Liberation Sans', sans-serif;">Sheet4</div>
<div class="t" style="left:710.4px;top:989.75px;font-size:12.7px;color:#444;font-family:'Liberation Sans', sans-serif;letter-spacing:-0.1px">Bukti Potong Unifikasi</div>
<svg style="left:0;top:0" width="1" height="1"><g fill="none" stroke="#555" stroke-width="1.1"><circle cx="895.3" cy="996" r="7.5"/><path d="M895.3 992v8M891.3 996h8"/></g></svg>
<svg style="left:0;top:0" width="1" height="1"><g fill="#999"><circle cx="1153" cy="991" r="0.9"/><circle cx="1153" cy="995.5" r="0.9"/><circle cx="1153" cy="1000" r="0.9"/></g></svg>
<div class="r" style="left:1184px;top:989px;width:700px;height:15px;background:#f0f0f0"></div>
<div class="r" style="left:1169px;top:988px;width:15px;height:16px;background:#fff;border:1px solid #8a8a8a"></div>
<svg style="left:0;top:0" width="1" height="1"><path d="M1179 992v8l-4-4z" fill="#262626"/></svg>
<div class="r" style="left:1292px;top:989px;width:484px;height:15px;background:#fff;border:1px solid #8a8a8a"></div>
<div class="r" style="left:1884px;top:988px;width:15px;height:16px;background:#fff;border:1px solid #8a8a8a"></div>
<svg style="left:0;top:0" width="1" height="1"><path d="M1889 992v8l4-4z" fill="#262626"/></svg>
<div class="r" style="left:0px;top:1010px;width:1920px;height:22px;background:#f3f2f1"></div>
<div class="r" style="left:0px;top:1010px;width:1920px;height:1px;background:#cfcfcf"></div>
<div class="t" style="left:8px;top:1014.84px;font-size:12px;color:#555;font-family:'Liberation Sans', sans-serif;">Enter</div>
<div class="t" style="left:55px;top:1015.18px;font-size:11.6px;color:#555;font-family:'Liberation Sans', sans-serif;">799 of 1740 records found</div>
<svg style="left:0;top:0" width="1" height="1"><g fill="none" stroke="#555" stroke-width="1.1"><circle cx="215" cy="1015.5" r="1.7"/><path d="M209 1018.5h12M215 1018.5v4l-4 4.5M215 1022.5l4 4.5"/><path d="M217 1022l5 5M222 1022l-5 5"/></g></svg>
<div class="t" style="left:227px;top:1015.18px;font-size:11.6px;color:#555;font-family:'Liberation Sans', sans-serif;">Accessibility: Investigate</div>
<svg style="left:0;top:0" width="1" height="1"><g fill="none" stroke="#a6a6a6" stroke-width="1">
<rect x="1632.5" y="1014.5" width="13" height="12"/><path d="M1632.5 1018.5h13M1632.5 1022.5h13M1636.5 1014.5v12M1641.5 1014.5v12"/>
<rect x="1672.5" y="1014.5" width="16" height="12"/><path d="M1676.5 1016.5v8h8v-8z"/>
<rect x="1712.5" y="1014.5" width="16" height="12"/><path d="M1716.5 1014.5v5h8v-5"/>
<path d="M1746 1020.5h7M1865 1020.5h8M1869 1016.5v8"/><path d="M1759 1021h100M1809.5 1017.5v6" stroke="#444"/>
</g></svg>
<div class="t" style="left:1885px;top:1015.27px;font-size:11.5px;color:#a6a6a6;font-family:'Liberation Sans', sans-serif;">100%</div>
<div class="r" style="left:0px;top:1032px;width:1920px;height:48px;background:linear-gradient(90deg,#e4e2b2 0%,#e5e2bb 30%,#ebe3d2 55%,#edd9e0 80%,#ecd6de 92%,#eedcc9 100%)"></div>
<div class="r" style="left:0px;top:1032px;width:1920px;height:1px;background:#b8b6a8"></div>
<svg style="left:0;top:0" width="1" height="1"><path d="M20 1066c-3 0-4-5 0-6c0-5 6-7 9-3c2-3 8-2 9 2c3 0 5 3 4 5c0 2-2 2-3 2z" fill="#aac8ee" stroke="#8fb2de" stroke-width="0.8"/>
<circle cx="38" cy="1047.5" r="7.5" fill="#c42b1c"/></svg>
<div class="t" style="left:-62px;width:200px;text-align:center;top:1043.11px;font-size:10.5px;color:#fff;font-family:'Liberation Sans', sans-serif;font-weight:bold;">2</div>
<div class="t" style="left:50px;top:1042.84px;font-size:12px;color:#1a1a1a;font-family:'Liberation Sans', sans-serif;">28°C</div>
<div class="t" style="left:50px;top:1057.84px;font-size:12px;color:#444;font-family:'Liberation Sans', sans-serif;">Berawan</div>
<svg style="left:0;top:0" width="1" height="1"><defs><linearGradient id="wl" x1="0" y1="0" x2="1" y2="1"><stop offset="0" stop-color="#4cc4f7"/><stop offset="1" stop-color="#0a63c9"/></linearGradient></defs><g fill="url(#wl)"><rect x="639" y="1045" width="11" height="11"/><rect x="651" y="1045" width="11" height="11"/><rect x="639" y="1057" width="11" height="11"/><rect x="651" y="1057" width="11" height="11"/></g></svg>
<div class="r" style="left:676px;top:1040px;width:218px;height:32px;background:#fbf8f0;border:1px solid #ddd8cc;border-radius:16px"></div>
<svg style="left:0;top:0" width="1" height="1"><g fill="none" stroke="#1a1a1a" stroke-width="1.6"><circle cx="693" cy="1054.5" r="5.5"/><path d="M697 1058.5l4.5 4.5"/></g></svg>
<div class="t" style="left:712px;top:1050.00px;font-size:13px;color:#555;font-family:'Liberation Sans', sans-serif;">Search</div>
<svg style="left:0;top:0" width="1" height="1"><ellipse cx="868" cy="1065.5" rx="19" ry="2.8" fill="#e3cfae"/>
<path d="M849 1051l4-6l4 1l3 5l16 1c4 0 6 3 6 6l3 8l-2 0l-3-6l0 6h-2l-1-6l-9 0l-1 6h-2l-1-6l-3 0l-1 6h-2l-1-7l-5-6l-3 1z" fill="#e8e8ee" stroke="#333" stroke-width="0.8"/>
<g stroke="#2a2a3a" stroke-width="1.6"><path d="M857 1047l2 5M861 1051l1 6M865 1052l0 8M869 1052l0 8M873 1052l0 8M877 1052l1 7M881 1054l1 5"/></g>
<path d="M849 1051l-1 3l3 0z" fill="#222"/></svg>
<svg style="left:0;top:0" width="1" height="1"><g><rect x="908" y="1049" width="14" height="14" fill="#1a1a1a"/><rect x="914" y="1043" width="14" height="14" fill="#fff" stroke="#bbb" stroke-width="1"/><rect x="908" y="1049" width="6" height="14" fill="#1a1a1a"/><rect x="908" y="1057" width="14" height="6" fill="#1a1a1a"/></g></svg>
<svg style="left:0;top:0" width="1" height="1"><defs><linearGradient id="cp1" x1="0" y1="0" x2="0.3" y2="1"><stop offset="0" stop-color="#1e6fe0"/><stop offset="0.6" stop-color="#27b24a"/><stop offset="1" stop-color="#f2a20c"/></linearGradient>
<linearGradient id="cp2" x1="0" y1="0" x2="0.3" y2="1"><stop offset="0" stop-color="#b13ee0"/><stop offset="0.6" stop-color="#f04a8c"/><stop offset="1" stop-color="#f7802a"/></linearGradient></defs>
<path d="M956 1046c2-2 6-2 9-1l3 1l-5 13c-1 3-4 5-7 5h-3c-2 0-3-2-2-4z" fill="url(#cp1)"/>
<path d="M969 1045c3 0 6 1 6 4l-3 12c-1 3-3 4-6 4l-7 1c2 0 3-2 4-4z" fill="url(#cp2)"/></svg>
<svg style="left:0;top:0" width="1" height="1"><g><path d="M994 1046h9l2 2h13v18h-24z" fill="#f2b900"/><rect x="994" y="1051" width="24" height="15" fill="#ffd54a"/><rect x="999" y="1058" width="14" height="6" fill="#1a73c9"/></g></svg>
<div class="r" style="left:1004px;top:1073px;width:6px;height:2px;background:#8a8a8a;border-radius:1px"></div>
<svg style="left:0;top:0" width="1" height="1"><defs><linearGradient id="ed" x1="0" y1="0" x2="1" y2="1"><stop offset="0" stop-color="#36c26b"/><stop offset="0.5" stop-color="#1b9de2"/><stop offset="1" stop-color="#0b5ea8"/></linearGradient></defs>
<circle cx="1050" cy="1055" r="12" fill="url(#ed)"/><circle cx="1046" cy="1061" r="5" fill="#e8e0d0"/><path d="M1044 1055a6 6 0 0 1 12 0" fill="#e8e0d0"/></svg>
<svg style="left:0;top:0" width="1" height="1"><g><rect x="1083" y="1046" width="22" height="20" rx="3" fill="#1e5aa8"/><path d="M1089 1046v-3h10v3" fill="none" stroke="#1e5aa8" stroke-width="2"/><rect x="1090" y="1052" width="4" height="4" fill="#f25022"/><rect x="1095" y="1052" width="4" height="4" fill="#7fba00"/><rect x="1090" y="1057" width="4" height="4" fill="#00a4ef"/><rect x="1095" y="1057" width="4" height="4" fill="#ffb900"/></g></svg>
<svg style="left:0;top:0" width="1" height="1"><g><circle cx="1139" cy="1055" r="12" fill="#e0393e"/><path d="M1133 1063l6-14l6 14" fill="none" stroke="#fff" stroke-width="2.5"/></g></svg>
<div class="r" style="left:1136px;top:1073px;width:6px;height:2px;background:#8a8a8a;border-radius:1px"></div>
<svg style="left:0;top:0" width="1" height="1"><g><path d="M1173 1066l1.5-4.5a10.5 10.5 0 1 1 4 3.8z" fill="#fff" stroke="#1f9d45" stroke-width="2"/><path d="M1178 1050c-1 2 0 5 3 8c3 3 6 4 8 3l0-2.5l-2.5-1.5l-1.5 1.5c-1.5-0.5-3-2-3.5-3.5l1.5-1.5l-1.5-2.5z" fill="#1f9d45"/><circle cx="1192" cy="1046.5" r="7.5" fill="#1976d2"/></g></svg>
<div class="t" style="left:1092px;width:200px;text-align:center;top:1041.11px;font-size:10.5px;color:#fff;font-family:'Liberation Sans', sans-serif;font-weight:bold;">8</div>
<div class="r" style="left:1180px;top:1073px;width:6px;height:2px;background:#8a8a8a;border-radius:1px"></div>
<svg style="left:0;top:0" width="1" height="1"><g><rect x="1214" y="1045" width="26" height="20" rx="2" fill="#2b2b2b"/><path d="M1218 1051l4 3l-4 3" fill="none" stroke="#fff" stroke-width="1.3"/><path d="M1224 1059h6" stroke="#fff" stroke-width="1.3"/></g></svg>
<div class="r" style="left:1224px;top:1073px;width:6px;height:2px;background:#8a8a8a;border-radius:1px"></div>
<div class="r" style="left:1252px;top:1037px;width:38px;height:38px;background:rgba(255,255,255,0.5);border-radius:5px"></div>
<svg style="left:0;top:0" width="1" height="1"><g><rect x="1262" y="1044" width="22" height="22" rx="2" fill="#21a366"/><rect x="1262" y="1055" width="22" height="11" fill="#107c41"/><rect x="1256" y="1048" width="14" height="14" rx="1.5" fill="#185c37"/><path d="M1259.5 1051l7 8M1266.5 1051l-7 8" stroke="#fff" stroke-width="1.6"/></g></svg>
<div class="r" style="left:1263px;top:1072px;width:16px;height:3px;background:#1a6fd6;border-radius:2px"></div>
<svg style="left:0;top:0" width="1" height="1"><g fill="none" stroke="#1a1a1a" stroke-width="1.2">
<path d="M1753 1058.5l5-5l5 5"/>
<rect x="1782" y="1049" width="13" height="10"/><path d="M1786 1062h6M1789 1059v3"/><rect x="1795" y="1048" width="3" height="5"/><path d="M1796.5 1053v10"/>
<path d="M1806 1052h3l4-3v12l-4-3h-3z"/><path d="M1816 1052c1 2 1 4 0 6M1819 1050c2 3 2 7 0 10M1822 1048c3 4 3 10 0 14"/>
</g></svg>
<div class="t" style="left:1500.8px;width:400px;text-align:right;top:1041.34px;font-size:12px;color:#1a1a1a;font-family:'Liberation Sans', sans-serif;">12:26</div>
<div class="t" style="left:1500.8px;width:400px;text-align:right;top:1057.34px;font-size:12px;color:#1a1a1a;font-family:'Liberation Sans', sans-serif;">31/01/2026</div>
</body></html>
